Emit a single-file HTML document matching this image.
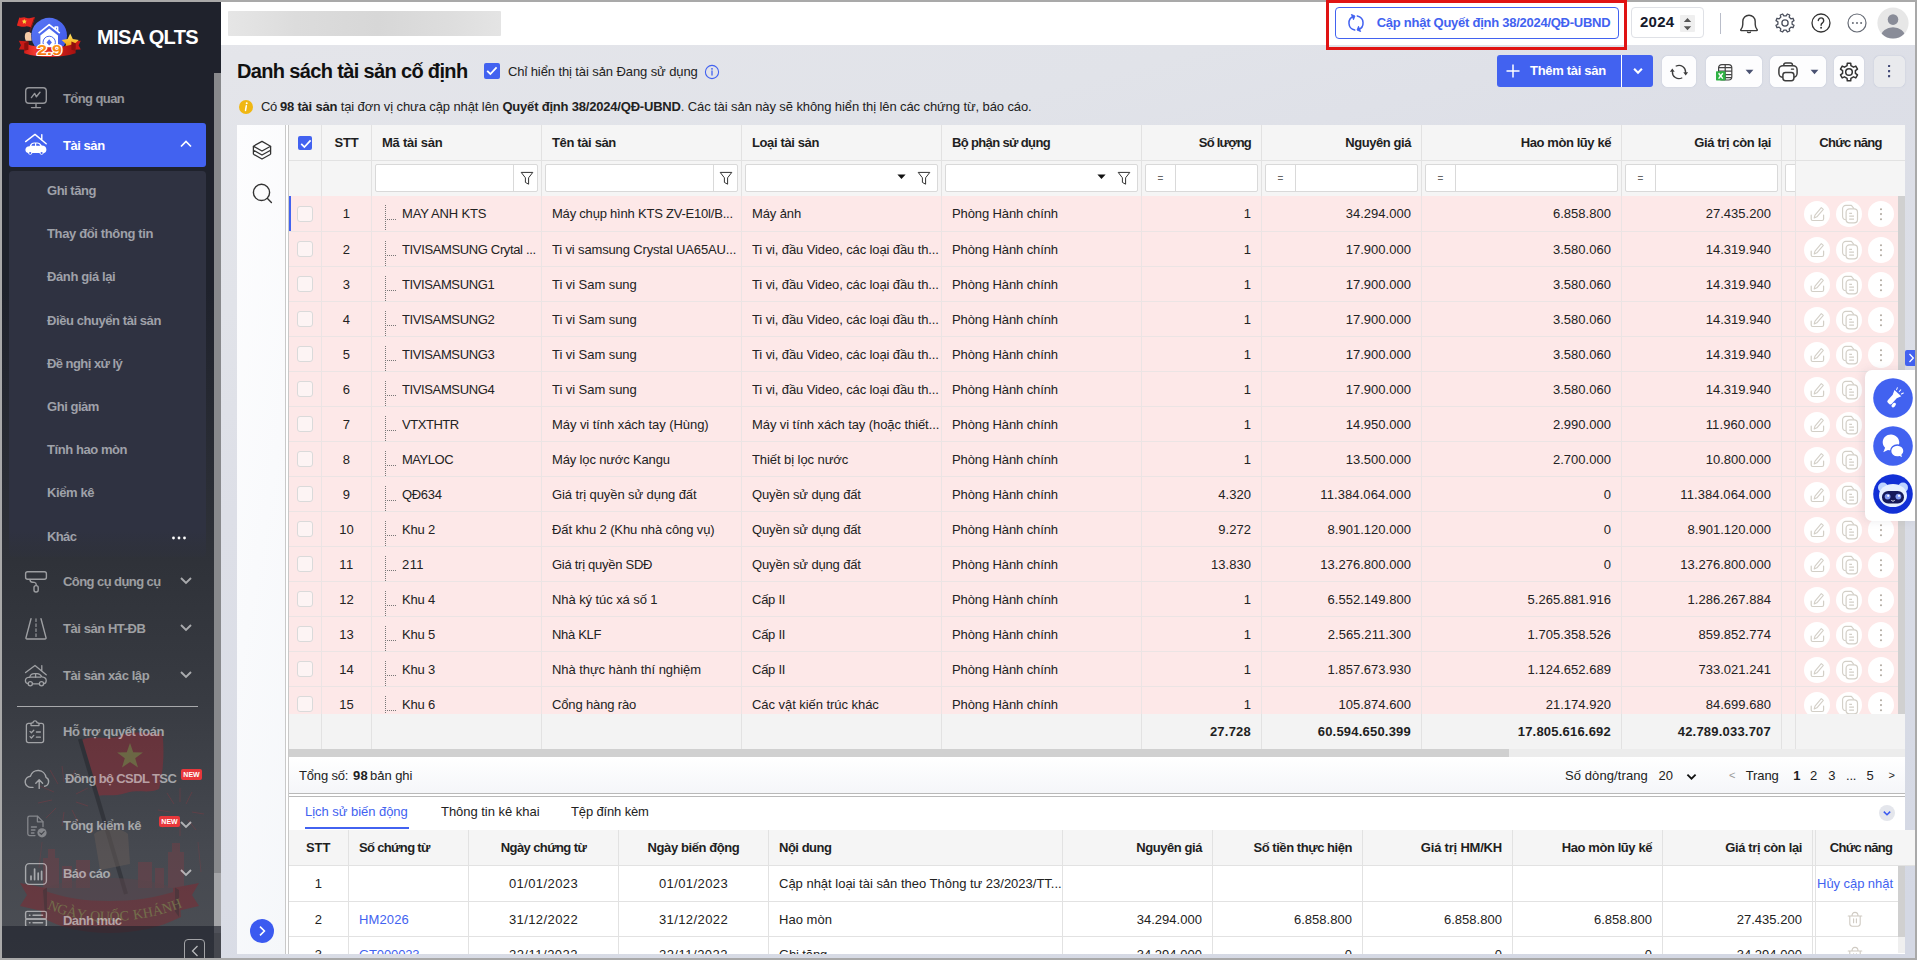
<!DOCTYPE html>
<html lang="vi"><head>
<meta charset="utf-8">
<title>MISA QLTS - Danh sách tài sản cố định</title>
<style>
*{box-sizing:border-box;margin:0;padding:0}
html,body{width:1917px;height:960px;overflow:hidden;background:#a9a9a9;font-family:"Liberation Sans",sans-serif;font-size:13px;color:#1f1f1f}
#app{position:absolute;left:2px;top:2px;width:1913px;height:956px;overflow:hidden;background:linear-gradient(165deg,#e6e7ec 0%,#e4e5ea 8%,#e1e3e9 25%,#dddfe7 39%,#dadde6 65%,#d4d8e4 96%)}
.f{white-space:nowrap;display:inline-block}
b,.b{font-weight:bold}
/* ---------- sidebar ---------- */
#side{position:absolute;left:0;top:0;width:219px;height:956px;background:linear-gradient(180deg,#1f222c 0%,#1f222c 30%,#2f3239 58.600%,#383b42 73%,#464950 89%,#4b4e54 100%);overflow:hidden}
#side .logo-t{position:absolute;left:95px;top:23px;font-size:20px;line-height:24px;font-weight:bold;color:#fff}
.mi{position:absolute;left:7px;width:197px;height:44px;color:rgba(255,255,255,.53);font-weight:bold;font-size:13px}
.mi .tx{position:absolute;left:54px;top:0;line-height:44px}
.mi svg.ic{position:absolute;left:14px;top:9px;opacity:.52}
.mi.act svg.ic{opacity:1}
.mi svg.ch{position:absolute;left:170px;top:16px;opacity:.58}
.mi.act svg.ch{opacity:1}
.mi.act{background:#4262f0;border-radius:3px;color:#fff}
.mi.act .tx{top:1px}
#sub{position:absolute;left:7px;top:169px;width:197px;height:386px;background:linear-gradient(180deg,#2f3241 0%,#2f3241 93%,rgba(47,50,65,.2) 100%);border-radius:4px}
#sub div{position:absolute;left:38px;color:#9fa1a9;font-weight:bold;font-size:13px;line-height:20px}
.new{position:absolute;background:#e8373b;color:#fff;font-size:7px;font-weight:bold;border-radius:2px;height:11px;line-height:11.500px;width:21px;text-align:center}
#mwrap{position:absolute;left:0;top:0;width:212px;height:924px;overflow:hidden}
#sdiv{position:absolute;left:15px;top:704px;width:181px;height:1px;background:#a8a9ac}
#sfoot{position:absolute;left:0;top:924px;width:219px;height:32px;background:rgba(31,34,44,.64);z-index:4}
#sfoot i{position:absolute;left:182px;top:13px;width:21px;height:24px;border:1px solid #a2a3a6;border-radius:4px}
#sscroll{position:absolute;left:212px;top:71px;width:7px;height:885px;background:#88898c}
#sscroll i{position:absolute;left:0;top:800px;width:7px;height:60px;background:#a4a5a8}
/* ---------- topbar ---------- */
#top{position:absolute;left:219px;top:0;width:1694px;height:43px;background:#fff}
#blur{position:absolute;left:7px;top:9px;width:273px;height:25px;background:linear-gradient(90deg,#e6e6e6,#dcdcdc 25%,#d7d7d7 55%,#dddddd 80%,#e4e4e4);border-radius:1px}
#redbox{position:absolute;left:1326px;top:0;width:301px;height:50px;border:3px solid #e01313;z-index:20}
#btnupd{position:absolute;left:1333px;top:5px;width:284px;height:32px;border:1px solid #4262f0;border-radius:4px;background:#fff;color:#4262f0;font-weight:bold;font-size:13px;z-index:21}
#btnupd .f{position:absolute;left:40.700px;top:0;line-height:30px}
#btnupd svg{position:absolute;left:11px;top:6px}
#year{position:absolute;left:1629px;top:5px;width:73px;height:31px;border:1px solid #dfe1e6;border-radius:4px;background:#fff}
#year .f{position:absolute;left:8px;top:-1px;line-height:30px;font-size:15px;font-weight:bold;color:#161a2c}
#year i{position:absolute;left:48px;top:6.500px;width:15px;height:17.500px;background:#efefef;border-radius:1px}
#year svg{position:absolute;left:51px;top:8.500px}
#tdiv{position:absolute;left:1718px;top:11px;width:1px;height:21px;background:#b9bdc9}
.ti{position:absolute}
/* ---------- heading ---------- */
#h1{position:absolute;left:235px;top:55px;font-size:20px;line-height:28px;font-weight:bold;color:#111}
.cbx{position:absolute;width:14.5px;height:14.5px;border-radius:2px;background:#4262f0}
.cbx svg{position:absolute;left:2px;top:3px}
#chk{position:absolute;left:506px;top:60px;line-height:20px;color:#222}
#note{position:absolute;left:259px;top:95px;line-height:20px;color:#222;white-space:nowrap}
.btn{position:absolute;top:53.500px;height:31px;border-radius:5px;background:#fdfdfe;border:1px solid #fdfdfe;box-shadow:0 0 1.500px #b9c0d4}
.btn svg{position:absolute}
#add{position:absolute;left:1495px;top:53px;width:156px;height:32px;border-radius:3px;background:#4262f0;color:#fff;font-weight:bold}
#add .f{position:absolute;left:33px;top:0;line-height:31px}
#add i{position:absolute;left:124px;top:0;width:1px;height:32px;background:#fff}
#add svg{position:absolute}
/* ---------- grid ---------- */
#lp{position:absolute;left:235px;top:123px;width:48px;height:829px;background:linear-gradient(100deg,#fdfdfe,#f5f7fa)}
#lpl{position:absolute;left:283px;top:123px;width:4px;height:829px;background:#fff;border-left:1px solid #c9c9c9;border-right:1px solid #c9c9c9}
#grid{position:absolute;left:287px;top:123px;width:1616px;height:632px;background:#fff;overflow:hidden}
#ghead{position:absolute;left:0;top:0;width:1616px;height:71px;background:#f5f5f5}
.hc{position:absolute;top:0;height:36px;border-right:1px solid #e2e2e2;border-bottom:1px solid #e2e2e2;font-weight:bold;line-height:35px;color:#1f1f1f;white-space:nowrap;overflow:hidden;padding:0 10px}
.hc.hr{text-align:right}.hc.hm{text-align:center;padding:0}
.fc{position:absolute;top:36px;height:35px;border-right:1px solid #e2e2e2}
.fi{position:absolute;top:3px;height:28px;background:#fff;border:1px solid #d9d9d9;border-radius:2px}
.fi i{position:absolute;top:0;width:1px;height:26px;background:#d9d9d9}
.fi svg{position:absolute}
.fi em{position:absolute;left:0;top:0;width:29px;text-align:center;line-height:28px;font-style:normal;font-size:10px;color:#666}
#rows{position:absolute;left:0;top:71px;width:1616px;height:518px;overflow:hidden}
.row{position:absolute;left:0;width:1616px;height:35px;background:#fde8e8}
.row.sel{height:36px}
.row.sel .c{height:36px;line-height:36px}
.row.sel .cb{top:10px}
.row.sel .ric{top:5px}
.row.sel:before{content:"";position:absolute;left:0;top:0;width:2px;height:35px;background:#4262f0;z-index:3}
.c{position:absolute;top:0;height:35px;border-right:1px solid #ebe4e4;border-bottom:1px solid #ebe4e4;line-height:35px;color:#222;white-space:nowrap;overflow:hidden}
.c.ctr{text-align:center}
.c.rt{text-align:right;padding-right:10px}
.c .t{position:absolute;top:0;overflow:hidden;white-space:nowrap}
.c.fn{border-right:none}
.cb{position:absolute;left:8px;top:9px;width:16px;height:16px;border:1px solid #dadada;border-radius:3px;background:#fdf4f4}
.tree{position:absolute;left:13px;top:9px;width:11px;height:26px;background:repeating-linear-gradient(180deg,#777 0 1px,transparent 1px 2px) 0 0/1px 100% no-repeat}
.tree:after{content:"";position:absolute;left:0;top:14px;width:11px;height:1px;background:repeating-linear-gradient(90deg,#777 0 1px,transparent 1px 2px)}
.ric{position:absolute;top:5px}
#vsb{position:absolute;left:1609px;top:71px;width:7px;height:518px;background:#d0d0d0}
#sum{position:absolute;left:0;top:589px;width:1616px;height:35px;background:#f3f3f3}
#sum div{position:absolute;top:0;height:35px;border-right:1px solid #e2e2e2;line-height:35px;font-weight:bold;text-align:right;padding-right:10px;color:#1f1f1f}
#hsb{position:absolute;left:0;top:624px;width:1616px;height:8px;background:#ececec}
#hsb i{position:absolute;left:0;top:0;width:1220px;height:8px;background:#d0d0d0}
/* ---------- paging ---------- */
#pg{position:absolute;left:287px;top:755px;width:1616px;height:36px;background:linear-gradient(180deg,#fff,#f5f6f9);line-height:37px;color:#222}
#pg .f{position:absolute;top:0}
#pgl{position:absolute;left:287px;top:791px;width:1616px;height:4px;background:#fff;border-top:1px solid #b9b9b9;border-bottom:1px solid #b9b9b9}
/* ---------- bottom ---------- */
#bt{position:absolute;left:287px;top:795px;width:1616px;height:157px;background:#fff;overflow:hidden}
#tabs .f{position:absolute;top:5px;line-height:20px;color:#222}
#tabs .on{color:#4262f0}
#tabs i{position:absolute;left:16px;top:30px;width:104px;height:2px;background:#4262f0}
#bh{position:absolute;left:0;top:33px;width:1616px;height:36px;background:#f5f5f5}
.br{position:absolute;left:0;width:1616px;height:35px;background:#fff}
.br .c{border-color:#e2e2e2;height:35px;line-height:35px}
.br.b1,.br.b1 .c{height:36px;line-height:36px}
a{color:#4262f0;text-decoration:none}
</style>
</head>
<body>
<div id="app">

<!-- ================= SIDEBAR ================= -->
<div id="side">
<svg style="position:absolute;left:0;top:690px;opacity:.33" width="212" height="266" viewBox="0 0 212 266">
<g fill="none" stroke="#c0303a" stroke-width="1" opacity=".7"><path d="M56 92l-8-14M62 90l-2-16M68 92l5-14M52 100l-14-6M50 108l-14 3M54 116l-10 10M62 120l-2 14M70 118l6 12M74 110l12 4M74 102l12-6"></path><path d="M172 112l-7-11M178 110l0-14M184 112l6-12M168 120l-12-2M170 128l-10 8M178 132l0 12M186 128l8 10M190 120l12 2"></path><path d="M40 150l-3 26M196 150l3 30" stroke-width=".7"></path></g>
<path d="M79 48.500c12-7 26 1 40-5s28-1 41.500-2c2 18 1 38-3.500 55.500-10 5-20 0-33 4s-20 1-30 3z" fill="#c01f2a"></path>
<path d="M128 51l3.200 9.200 9.700.2-7.700 5.900 2.800 9.300-8-5.500-8 5.500 2.800-9.300-7.700-5.900 9.700-.2z" fill="#c9b63e"></path>
<path d="M78 47l46 155" stroke="#14151a" stroke-width="4.200"></path>
<path d="M92 142c6-6 26-8 34 0l2 30-30 6z" fill="#a08068" opacity=".55"></path>
<path d="M41 196v-30h5v-9h7v9h4v30zM60 196v-22h10v22zM74 196v-28h14v28zM136 196v-26h14v26zM153 196v-20h9v20zM166 196v-36h4v-9h8v9h4v36z" fill="#8a3a42"></path>
<path d="M44 196c20-8 42-10 62-10s44 2 66 10v20H44z" fill="#7c3a42" opacity=".55"></path>
<path d="M18 191l26 5v24l-26-6 7-11zM197 191l-26 5v24l26-6-7-11z" fill="#a3161f"></path>
<path d="M41 198c20 8 42 11 66 11s48-3 70-11l2 27c-22 11-46 16-72 16s-48-5-68-16z" fill="#9c1a22"></path>
<path d="M41 198l4-2.500v24l-2 5.500zM177 198l-4-2.500v24l4 5.500z" fill="#5e0c12"></path>
<path id="rib" d="M44 216c20 9 41 13 63 13s50-4 76-15" fill="none"></path>
<text font-family="Liberation Serif, serif" font-size="14" fill="#c9b63e" word-spacing="1"><textPath href="#rib" startOffset="1">NGÀY QUỐC KHÁNH</textPath></text>
</svg>
<svg style="position:absolute;left:14px;top:14px" width="72" height="46" viewBox="0 0 72 46">
<defs><linearGradient id="lg1" x1="0" y1="0" x2="1" y2="1"><stop offset="0" stop-color="#5a78f6"></stop><stop offset="1" stop-color="#3d55e6"></stop></linearGradient>
<linearGradient id="lg2" x1="0" y1="0" x2="0" y2="1"><stop offset="0" stop-color="#ffe566"></stop><stop offset=".55" stop-color="#f8b523"></stop><stop offset="1" stop-color="#e88a10"></stop></linearGradient>
<linearGradient id="lg3" x1="0" y1="0" x2="1" y2="0"><stop offset="0" stop-color="#d21e1a"></stop><stop offset=".2" stop-color="#f0392f"></stop><stop offset=".6" stop-color="#d8201b"></stop><stop offset="1" stop-color="#a51210"></stop></linearGradient>
<linearGradient id="lg4" x1="0" y1="0" x2="0" y2="1"><stop offset="0" stop-color="#ffa51a"></stop><stop offset="1" stop-color="#f46c0a"></stop></linearGradient></defs>
<path d="M3.300 1.600c2.200.8 3.600-.6 5.600-.2s3.400 1.200 5.400.6 3-.8 4.600-.8l-3.400 10.600c-1.800-.6-3.400-1.800-5.600-1.400s-3.600.6-5.400.2-2.800-.4-3.600-1z" fill="#e5261f"></path><path d="M8.300 3.100l.8 1.500 1.700.2-1.200 1.200.3 1.700-1.600-.8-1.500.8.300-1.700-1.300-1.200 1.700-.2z" fill="#f9d640"></path>
<path d="M18.300 2.200l-4.800 13.800" stroke="#7a1512" stroke-width=".9"></path>
<path d="M9.600 17c1.600-1.400 4.200-1.400 5.400.2l.6 7.600H9.800c-1.200-2.400-1.400-5.800-.2-7.800z" fill="#f6cba6"></path>
<circle cx="33.200" cy="19.600" r="17.800" fill="url(#lg1)"></circle>
<path d="M22.600 17.200l10.600-8.600 10.600 8.600M41.600 15v-4h-2.400v2" fill="none" stroke="#fff" stroke-width="1.600" stroke-linejoin="round"></path>
<path d="M24.400 19.600l8.800-7.200 8.800 7.200v12H24.400z" fill="#fff"></path>
<circle cx="33.200" cy="26.400" r="6.200" fill="#fff" stroke="#4a66ee" stroke-width="1"></circle><path d="M33.200 23.200l2.700 3.200-2.700 3.200-2.700-3.200z" fill="#4a66ee"></path>
<path d="M2.800 24.800l9.600.6v8.400l-9.600-.4 2.200-4.200zM64.800 24.800l-9.400.6v8.400l9.400-.4-2.200-4.200z" fill="#c81a16"></path>
<path d="M54.200 17.600l2.600 5.500 6 .8-4.400 4.200 1.100 6-5.300-2.900-5.300 2.900 1.100-6-4.400-4.200 6-.8z" fill="url(#lg2)"></path>
<path d="M8.200 27.200c8 3 16.600 4 25.600 4s17.800-1 25.800-4v10c-8 2.600-16.800 3.800-25.800 3.800S16.200 39.800 8.200 37.200z" fill="url(#lg3)"></path>
<path d="M8.200 27.200l4.200-1.800v8.400l-4.200 1zM59.600 27.200l-4.200-1.800v8.400l4.200 1z" fill="#8e0f0d"></path>
<text x="33.600" y="38.800" text-anchor="middle" font-family="Liberation Sans, sans-serif" font-weight="bold" font-size="15.500" fill="url(#lg4)" stroke="#fff" stroke-width="2.200" paint-order="stroke" stroke-linejoin="round" textLength="25" lengthAdjust="spacingAndGlyphs">2.9</text>
</svg>
  <div class="logo-t f" style="letter-spacing: -0.63px;">MISA QLTS</div>
<div id="mwrap">
<div class="mi" style="top:74.5px"><svg class="ic" style="margin-top:-1.500px" width="26" height="26" viewBox="0 0 26 26" fill="none" stroke="#fff" stroke-width="1.4" stroke-linecap="round" stroke-linejoin="round"><rect x="2.7" y="3.7" width="20.6" height="15.6" rx="3.2"></rect><path d="M13 19.5v4M8.5 23.6h9M8.4 13.6l3.2-4.2 1.8 3.4 3.6-4.6"></path></svg><span class="tx f" style="left: 54px; letter-spacing: -0.59px;">Tổng quan</span></div>
<div class="mi act" style="top:121px"><svg class="ic" width="26" height="26" viewBox="0 0 26 26"><path d="M2.6 9.6L12 2.4l11.2 9.4M18.8 2.6v5.6" fill="none" stroke="#fff" stroke-width="1.4" stroke-linecap="round" stroke-linejoin="round"></path><path d="M6.6 14.2c.6-2.4 2.2-3.8 4.8-3.8h2.8c2 0 3.4 1 4.6 3.2 2.6.2 4.6 1.4 4.6 3.8 0 2-1 3.4-2.6 3.6a2.3 2.3 0 0 1-4.4 0H9.4a2.3 2.3 0 0 1-4.4 0c-1.600-.2-2.600-1.400-2.600-3.200 0-2 1.600-3.400 4.200-3.600z" fill="#fff"></path><path d="M8.4 13.8c.4-1.400 1.400-2.200 2.800-2.200h.8v2.200zM13.200 11.600h1.200c1.200 0 2.200.8 2.800 2.200h-4z" fill="#4262f0"></path><circle cx="7.2" cy="21" r="1.100" fill="#4262f0"></circle><circle cx="18.600" cy="21" r="1.100" fill="#4262f0"></circle></svg><span class="tx f" style="left: 54px; letter-spacing: -0.45px;">Tài sản</span><svg class="ch" width="14" height="10" viewBox="0 0 14 10"><path d="M2 7.500l5-5 5 5" fill="none" stroke="#fff" stroke-width="1.700"></path></svg></div>
<div id="sub"><div class="f" style="top: 10px; letter-spacing: -0.48px;">Ghi tăng</div><div class="f" style="top: 53px; letter-spacing: -0.36px;">Thay đổi thông tin</div><div class="f" style="top: 96px; letter-spacing: -0.39px;">Đánh giá lại</div><div class="f" style="top: 140px; letter-spacing: -0.43px;">Điều chuyển tài sản</div><div class="f" style="top: 183px; letter-spacing: -0.55px;">Đề nghị xử lý</div><div class="f" style="top: 226px; letter-spacing: -0.46px;">Ghi giảm</div><div class="f" style="top: 269px; letter-spacing: -0.43px;">Tính hao mòn</div><div class="f" style="top: 312px; letter-spacing: -0.4px;">Kiểm kê</div><div class="f" style="top: 356px; letter-spacing: -0.63px;">Khác</div><svg style="position:absolute;left:162px;top:364px" width="16" height="6" viewBox="0 0 16 6"><circle cx="2.500" cy="3" r="1.400" fill="#fff"></circle><circle cx="8" cy="3" r="1.400" fill="#fff"></circle><circle cx="13.500" cy="3" r="1.400" fill="#fff"></circle></svg></div>
<div class="mi" style="top:557.5px"><svg class="ic" width="26" height="26" viewBox="0 0 26 26" fill="none" stroke="#fff" stroke-width="1.4" stroke-linecap="round" stroke-linejoin="round"><rect x="2.6" y="2.8" width="20.8" height="7.4" rx="2"></rect><path d="M7 10.400c0 2 1 2.600 2.600 2.800l1.800.2c1.200.2 1.800.8 1.800 2.200v1"></path><rect x="11" y="16.600" width="4.200" height="6.400" rx="2"></rect></svg><span class="tx f" style="left: 54px; letter-spacing: -0.57px;">Công cụ dụng cụ</span><svg class="ch" width="14" height="10" viewBox="0 0 14 10"><path d="M2 2l5 5 5-5" fill="none" stroke="#fff" stroke-width="1.900"></path></svg></div>
<div class="mi" style="top:604.5px"><svg class="ic" width="26" height="26" viewBox="0 0 26 26" fill="none" stroke="#fff" stroke-width="1.4" stroke-linecap="round" stroke-linejoin="round"><path d="M8 2.800L3 21.600c-.2.800.2 1.400 1 1.400h18c.8 0 1.200-.6 1-1.400L18 2.800"></path><path d="M13 2.800v18" stroke-dasharray="2.600 2.400" stroke-width="1.100"></path></svg><span class="tx f" style="left: 54px; letter-spacing: -0.44px;">Tài sản HT-ĐB</span><svg class="ch" width="14" height="10" viewBox="0 0 14 10"><path d="M2 2l5 5 5-5" fill="none" stroke="#fff" stroke-width="1.900"></path></svg></div>
<div class="mi" style="top:651.5px"><svg class="ic" width="26" height="26" viewBox="0 0 26 26" fill="none" stroke="#fff" stroke-width="1.300" stroke-linecap="round" stroke-linejoin="round"><path d="M2.600 9.600L12 2.400l11.200 9.400M18.800 2.600v5.600"></path><path d="M6.600 14.400c.6-2.400 2.200-3.800 4.800-3.800h2.800c2 0 3.400 1 4.600 3.200 2.600.2 4.400 1.400 4.400 3.600 0 1.800-.8 3-2.200 3.200M16 20.800H9.800M4.800 20.600c-1.400-.2-2.400-1.400-2.400-3 0-2 1.600-3.200 4.200-3.400h11"></path><circle cx="7.300" cy="20.800" r="2.100"></circle><circle cx="18.500" cy="20.800" r="2.100"></circle><path d="M12.600 10.800v3.400"></path></svg><span class="tx f" style="left: 54px; letter-spacing: -0.42px;">Tài sản xác lập</span><svg class="ch" width="14" height="10" viewBox="0 0 14 10"><path d="M2 2l5 5 5-5" fill="none" stroke="#fff" stroke-width="1.900"></path></svg></div>
<div class="mi" style="top:708px"><svg class="ic" style="margin-left:-1px" width="26" height="26" viewBox="0 0 26 26" fill="none" stroke="#fff" stroke-width="1.300" stroke-linecap="round" stroke-linejoin="round"><path d="M9 4.400H6.400a2 2 0 0 0-2 2v15.200a2 2 0 0 0 2 2h13.200a2 2 0 0 0 2-2V6.400a2 2 0 0 0-2-2H17"></path><path d="M9 6.600V4.800c0-.6.400-1 1-1h1a2 2 0 0 1 4 0h1c.6 0 1 .4 1 1v1.800z"></path><path d="M8 12.400l1.400 1.400 2.400-2.600M8 17.600l1.400 1.400 2.400-2.600M14.400 13h4M14.400 18.200h4"></path></svg><span class="tx f" style="left: 54px; letter-spacing: -0.46px;">Hỗ trợ quyết toán</span></div>
<div class="mi" style="top:754.5px"><svg class="ic" width="28" height="26" viewBox="0 0 28 26" fill="none" stroke="#fff" stroke-width="1.400" stroke-linecap="round" stroke-linejoin="round"><path d="M10 21.400H8.200A5.600 5.600 0 0 1 7.400 10.200 8 8 0 0 1 23 11.400c1.800.8 2.800 2.600 2.600 4.600-.2 2.200-1.800 3.800-4 4.200"></path><path d="M16.200 22.400v-8.200M12.800 17.200l3.400-3.400 3.400 3.400"></path></svg><span class="tx f" style="left: 56px; letter-spacing: -0.62px;">Đồng bộ CSDL TSC</span></div>
<div class="mi" style="top:801.5px"><svg class="ic" width="26" height="26" viewBox="0 0 26 26" fill="none" stroke="#c2c3c6" stroke-width="1.300" stroke-linecap="round" stroke-linejoin="round"><path d="M12 22.600H6.600a1.800 1.800 0 0 1-1.800-1.800V5a1.800 1.800 0 0 1 1.800-1.800h8l5.400 5.400v5"></path><path d="M14.400 3.400v5.400h5.400M8.400 14h5M8.400 17h3.600M8.400 20h2.600"></path><circle cx="19" cy="19.800" r="4.600" fill="#c2c3c6" stroke="none"></circle><path d="M16.800 19.800l1.600 1.600 2.800-3" stroke="#45484e" stroke-width="1.200"></path></svg><span class="tx f" style="left: 54px; letter-spacing: -0.42px;">Tổng kiểm kê</span><svg class="ch" width="14" height="10" viewBox="0 0 14 10"><path d="M2 2l5 5 5-5" fill="none" stroke="#fff" stroke-width="1.900"></path></svg></div>
<div class="mi" style="top:849.5px"><svg class="ic" width="26" height="26" viewBox="0 0 26 26" fill="none" stroke="#fff" stroke-width="1.400" stroke-linecap="round" stroke-linejoin="round"><rect x="2.600" y="2.600" width="20.800" height="20.800" rx="3.600"></rect><path d="M8 18.600v-3.400M11.600 18.600V8M15.200 18.600v-6.400M18.600 18.600v-8.200" stroke-width="1.700"></path></svg><span class="tx f" style="left: 54px; letter-spacing: -0.53px;">Báo cáo</span><svg class="ch" width="14" height="10" viewBox="0 0 14 10"><path d="M2 2l5 5 5-5" fill="none" stroke="#fff" stroke-width="1.900"></path></svg></div>
<div class="mi" style="top:896.5px"><svg class="ic" width="26" height="26" viewBox="0 0 26 26" fill="none" stroke="#fff" stroke-width="1.400" stroke-linecap="round" stroke-linejoin="round"><rect x="2.600" y="3.400" width="20.800" height="7.600" rx="1.600"></rect><rect x="2.600" y="11" width="20.800" height="7.600" rx="1.600"></rect><path d="M2.600 18.600v4.600M23.400 18.600v4.600M6.400 7.200h.6M10 7.200h9.600M6.400 14.800h.6M10 14.800h9.600"></path></svg><span class="tx f" style="left: 54px; letter-spacing: -0.54px;">Danh mục</span></div>
<div class="new" style="left:179px;top:767px">NEW</div>
<div class="new" style="left:157px;top:814px">NEW</div>
  <div id="sdiv"></div>
</div>
  <div id="sscroll"><i></i></div>

  <div id="sfoot"><i></i><svg style="position:absolute;left:187px;top:17px" width="12" height="16" viewBox="0 0 12 16"><path d="M8.5 3L3.5 8l5 5" fill="none" stroke="#b8b9bc" stroke-width="1.3"></path></svg></div>
</div>

<!-- ================= TOPBAR ================= -->
<div id="top">
  <div id="blur"></div>
</div>
<div id="btnupd"><svg width="18" height="18" viewBox="0 0 18 18"><g fill="none" stroke="#4262f0" stroke-width="1.500" stroke-linecap="round"><path d="M7.700 16A7.100 7.100 0 0 1 6.800 2.300"></path><path d="M10.300 2A7.100 7.100 0 0 1 11.200 15.700"></path></g><path d="M4.300.3l3.700 1.700-1.500 3.800zM13.700 17.700l-3.700-1.700 1.500-3.800z" fill="#4262f0" stroke="#4262f0" stroke-width=".8" stroke-linejoin="round"></path></svg><span class="f" style="letter-spacing: -0.26px;">Cập nhật Quyết định 38/2024/QĐ-UBND</span></div>
<div id="year"><i></i><svg width="9" height="14" viewBox="0 0 9 14"><path d="M.8 5l3.700-4 3.700 4zM.8 9.200l3.700 4 3.700-4z" fill="#555"></path></svg><span class="f" style="letter-spacing: 0.27px;">2024</span></div>
<div id="tdiv"></div>
<svg class="ti" style="left:1736px;top:9px" width="22" height="24" viewBox="0 0 22 24"><path d="M3.200 19.600h15.600c.5 0 .7-.5.400-.9-1.400-1.600-2-3-2-5.500v-2.800a6.200 6.200 0 0 0-12.400 0v2.800c0 2.500-.6 3.900-2 5.500-.3.400-.1.900.4.900z" fill="none" stroke="#3a3a3a" stroke-width="1.400" stroke-linejoin="round"></path><path d="M9.400 20.400a1.600 1.300 0 0 0 3.200 0" fill="none" stroke="#3a3a3a" stroke-width="1.300"></path></svg>
<svg class="ti" style="left:1771.900px;top:10px" width="22" height="22" viewBox="0 0 22 22"><g fill="none" stroke="#4a4f5c" stroke-width="1.300" stroke-linejoin="round"><path d="M12.19 3.90L13.33 2.00L15.72 2.99L15.18 5.14L16.86 6.82L19.01 6.28L20.00 8.67L18.10 9.81L18.10 12.19L20.00 13.33L19.01 15.72L16.86 15.18L15.18 16.86L15.72 19.01L13.33 20.00L12.19 18.10L9.81 18.10L8.67 20.00L6.28 19.01L6.82 16.86L5.14 15.18L2.99 15.72L2.00 13.33L3.90 12.19L3.90 9.81L2.00 8.67L2.99 6.28L5.14 6.82L6.82 5.14L6.28 2.99L8.67 2.00L9.81 3.90z"></path><circle cx="11" cy="11" r="3.100"></circle></g></svg>
<svg class="ti" style="left:1808px;top:10px" width="22" height="22" viewBox="0 0 22 22"><circle cx="11" cy="11" r="9" fill="none" stroke="#333" stroke-width="1.300"></circle><path d="M8.300 8.600a2.700 2.700 0 1 1 4.300 2.200c-.9.700-1.500 1.100-1.500 2.400" fill="none" stroke="#333" stroke-width="1.400" stroke-linecap="round"></path><circle cx="11.100" cy="15.700" r=".95" fill="#333"></circle></svg>
<svg class="ti" style="left:1844px;top:10px" width="22" height="22" viewBox="0 0 22 22"><circle cx="11" cy="11" r="9" fill="none" stroke="#666b75" stroke-width="1.200"></circle><circle cx="6.900" cy="11" r="1" fill="#666b75"></circle><circle cx="11" cy="11" r="1" fill="#666b75"></circle><circle cx="15.100" cy="11" r="1" fill="#666b75"></circle></svg>
<svg class="ti" style="left:1875px;top:5px" width="32" height="32" viewBox="0 0 32 32"><defs><clipPath id="av"><circle cx="16" cy="16" r="15.600"></circle></clipPath></defs><circle cx="16" cy="16" r="15.600" fill="#e7e7e7"></circle><g clip-path="url(#av)" fill="#898c98"><circle cx="16" cy="12.600" r="5.300"></circle><ellipse cx="16" cy="29.500" rx="12" ry="9.300"></ellipse></g></svg>

<!-- ================= HEADING ================= -->
<div id="h1" class="f" style="letter-spacing: -0.65px;">Danh sách tài sản cố định</div>
<div class="cbx" style="left:481.600px;top:60.700px;width:16.300px;height:16.300px"><svg style="left:2.300px;top:3.400px" width="12" height="10" viewBox="0 0 12 10"><path d="M1.2 4.8l3.2 3.2L10.6 1.4" fill="none" stroke="#fff" stroke-width="1.8"></path></svg></div>
<div id="chk" class="f" style="letter-spacing: -0.1px;">Chỉ hiển thị tài sản Đang sử dụng</div>
<svg style="position:absolute;left:702px;top:62px" width="16" height="16" viewBox="0 0 16 16"><circle cx="8" cy="8" r="6.6" fill="none" stroke="#4262f0" stroke-width="1.1"></circle><path d="M8 7v4" stroke="#4262f0" stroke-width="1.3" stroke-linecap="round"></path><circle cx="8" cy="4.8" r=".9" fill="#4262f0"></circle></svg>
<svg style="position:absolute;left:236px;top:97px" width="16" height="16" viewBox="0 0 16 16"><circle cx="8" cy="8" r="7" fill="#f0b712"></circle><path d="M8.3 6.8l-.8 4.6" stroke="#fff" stroke-width="1.5" stroke-linecap="round"></path><circle cx="8.7" cy="4.3" r="1" fill="#fff"></circle></svg>
<div id="note"><span class="f" style="letter-spacing: -0.38px;">Có&nbsp;</span><b class="f" style="letter-spacing: -0.22px;">98 tài sản</b><span class="f" style="letter-spacing: -0.1px;">&nbsp;tại đơn vị chưa cập nhật lên&nbsp;</span><b class="f" style="letter-spacing: -0.2px;">Quyết định 38/2024/QĐ-UBND</b><span class="f" style="letter-spacing: -0.1px;">. Các tài sản này sẽ không hiển thị lên các chứng từ, báo cáo.</span></div>
<div id="add"><svg style="left:8px;top:8px" width="16" height="16" viewBox="0 0 16 16"><path d="M8 1.500v13M1.500 8h13" stroke="#fff" stroke-width="1.500"></path></svg><span class="f" style="letter-spacing: -0.3px;">Thêm tài sản</span><i></i><svg style="left:135.700px;top:11.500px" width="10" height="8" viewBox="0 0 10 8"><path d="M1.100 1.800L5 5.700l3.900-3.900" fill="none" stroke="#fff" stroke-width="2.100"></path></svg></div>
<div class="btn" style="left:1660px;width:34px"><svg style="left:5.850px;top:5.300px" width="20" height="20" viewBox="0 0 20 20"><g fill="none" stroke="#3c3c3c" stroke-width="1.300" stroke-linecap="round"><path d="M7.200 4A6.600 6.600 0 0 1 16.600 10.300"></path><path d="M12.800 16A6.600 6.600 0 0 1 3.400 9.700"></path></g><path d="M14.300 10.200h4.800l-2.400 3.200zM.9 9.800h4.800L3.300 6.600z" fill="#3c3c3c"></path></svg></div>
<div class="btn" style="left:1704px;width:56px"><svg style="left:9px;top:6px" width="20" height="20" viewBox="0 0 20 20"><g fill="none" stroke="#444" stroke-width="1.200"><rect x="2.600" y="1.600" width="13.200" height="15.400" rx="3.200"></rect><path d="M2.600 4.600h13.200M2.600 8.100h13.200M2.600 11.700h13.200M2.600 14.600h13.200M9.200 1.600v15.400"></path></g><rect x="0" y="8.300" width="9.500" height="9.100" rx=".6" fill="#2fb344"></rect><path d="M2.600 10.200l4.200 5.400M6.800 10.200l-4.200 5.400" stroke="#fff" stroke-width="1.400"></path></svg><svg style="left:38.400px;top:12.600px" width="9" height="6" viewBox="0 0 9 6"><path d="M.6.800h7.800L4.500 5.200z" fill="#4a5272"></path></svg></div>
<div class="btn" style="left:1768px;width:56px"><svg style="left:6.200px;top:5.500px" width="22" height="22" viewBox="0 0 22 22" fill="none" stroke="#3c3c3c" stroke-width="1.500" stroke-linejoin="round"><path d="M6.800 3.600V2.800c0-1 .9-1.800 2-1.800h4.600c1.100 0 2 .8 2 1.800v.8"></path><rect x="1.900" y="3.700" width="18.200" height="11.600" rx="4"></rect><rect x="5.900" y="10.400" width="11" height="8.300" rx="2.600" fill="#fdfdfe"></rect><path d="M14.400 7.200h2.200" stroke-linecap="round" stroke-width="1.200"></path></svg><svg style="left:38.500px;top:12.600px" width="9" height="6" viewBox="0 0 9 6"><path d="M.6.800h7.800L4.500 5.200z" fill="#4a5272"></path></svg></div>
<div class="btn" style="left:1832px;width:30px"><svg style="left:2.900px;top:4.300px" width="22" height="22" viewBox="0 0 22 22"><g fill="none" stroke="#333" stroke-width="1.500" stroke-linejoin="round"><path d="M9.07 4.69L9.28 2.17L12.72 2.17L12.93 4.69L15.50 6.17L17.79 5.10L19.51 8.07L17.43 9.52L17.43 12.48L19.51 13.93L17.79 16.90L15.50 15.83L12.93 17.31L12.72 19.83L9.28 19.83L9.07 17.31L6.50 15.83L4.21 16.90L2.49 13.93L4.57 12.48L4.57 9.52L2.49 8.07L4.21 5.10L6.50 6.17z"></path><circle cx="11" cy="11" r="3.300"></circle></g></svg></div>
<div class="btn" style="left:1871.500px;width:31px;background:#e9eaed;border-color:#e9eaed"><svg style="left:11.500px;top:4.500px" width="6" height="20" viewBox="0 0 6 20"><rect x="2" y="4" width="2.100" height="2.100" rx=".5" fill="#3f4775"></rect><rect x="2" y="9.100" width="2.100" height="2.100" rx=".5" fill="#3f4775"></rect><rect x="2" y="14.100" width="2.100" height="2.100" rx=".5" fill="#3f4775"></rect></svg></div>

<!-- ================= GRID ================= -->
<div id="lp"></div><div id="lpl"></div>
<svg style="position:absolute;left:249px;top:136.500px" width="22" height="24" viewBox="0 0 22 24" fill="none" stroke="#333" stroke-width="1.300" stroke-linejoin="round"><path d="M11 2.400l8.600 4.800L11 12 2.400 7.200z"></path><path d="M2.400 11.200L11 16l8.600-4.800M2.400 15.200L11 20l8.600-4.800M2.400 7.200v8M19.600 7.200v8"></path></svg>
<svg style="position:absolute;left:249px;top:180px" width="24" height="24" viewBox="0 0 24 24" fill="none" stroke="#333" stroke-width="1.400" stroke-linecap="round"><circle cx="10.500" cy="10.400" r="8.100"></circle><path d="M16.500 16.500l3.900 3.900"></path></svg>
<svg style="position:absolute;left:248px;top:917px" width="24" height="24" viewBox="0 0 24 24"><circle cx="12" cy="12" r="12" fill="#3b5af0"></circle><path d="M10 7.600l4.400 4.400-4.400 4.400" fill="none" stroke="#fff" stroke-width="1.600"></path></svg>
<div id="grid">
  <div id="ghead">
<div class="hc hm" style="left:0;width:33px"><div class="cbx" style="left:8.700px;top:10.700px"><svg width="12" height="10" viewBox="0 0 12 10"><path d="M1.200 4.800l3.200 3.200L10.600 1.400" fill="none" stroke="#fff" stroke-width="1.700"></path></svg></div></div>
<div class="hc hm" style="left:33px;width:50px"><span class="f" style="letter-spacing: -0.11px;">STT</span></div>
<div class="hc " style="left:83px;width:170px"><span class="f" style="letter-spacing: -0.23px;">Mã tài sản</span></div>
<div class="hc " style="left:253px;width:200px"><span class="f" style="letter-spacing: -0.36px;">Tên tài sản</span></div>
<div class="hc " style="left:453px;width:200px"><span class="f" style="letter-spacing: -0.38px;">Loại tài sản</span></div>
<div class="hc " style="left:653px;width:200px"><span class="f" style="letter-spacing: -0.64px;">Bộ phận sử dụng</span></div>
<div class="hc hr" style="left:853px;width:120px"><span class="f" style="letter-spacing: -0.78px;">Số lượng</span></div>
<div class="hc hr" style="left:973px;width:160px"><span class="f" style="letter-spacing: -0.44px;">Nguyên giá</span></div>
<div class="hc hr" style="left:1133px;width:200px"><span class="f" style="letter-spacing: -0.42px;">Hao mòn lũy kế</span></div>
<div class="hc hr" style="left:1333px;width:160px"><span class="f" style="letter-spacing: -0.37px;">Giá trị còn lại</span></div>
<div class="hc" style="left:1493px;width:14px;padding:0"></div>
<div class="hc hm" style="left:1507px;width:109px;border-right:none"><span class="f" style="letter-spacing: -0.67px;">Chức năng</span></div>
<div class="fc" style="left:0;width:33px"></div><div class="fc" style="left:33px;width:50px"></div>
<div class="fc" style="left:83px;width:170px"><div class="fi" style="left:3px;width:163px"><i style="left:137px"></i><svg style="left:144px;top:6px" width="14" height="15" viewBox="0 0 14 15"><path d="M1.200 1.400h11.600L8.600 6.800v6.400l-3.200-1.800V6.800z" fill="none" stroke="#333" stroke-width="1" stroke-linejoin="round"></path></svg></div></div>
<div class="fc" style="left:253px;width:200px"><div class="fi" style="left:3px;width:193px"><i style="left:167px"></i><svg style="left:173px;top:6px" width="14" height="15" viewBox="0 0 14 15"><path d="M1.200 1.400h11.600L8.600 6.800v6.400l-3.200-1.800V6.800z" fill="none" stroke="#333" stroke-width="1" stroke-linejoin="round"></path></svg></div></div>
<div class="fc" style="left:453px;width:200px"><div class="fi" style="left:3px;width:193px"><svg style="left:151px;top:8.500px" width="9" height="6" viewBox="0 0 9 6"><path d="M.4.600h8.200L4.500 5z" fill="#111"></path></svg><svg style="left:171px;top:6px" width="14" height="15" viewBox="0 0 14 15"><path d="M1.200 1.400h11.600L8.600 6.800v6.400l-3.200-1.800V6.800z" fill="none" stroke="#333" stroke-width="1" stroke-linejoin="round"></path></svg></div></div>
<div class="fc" style="left:653px;width:200px"><div class="fi" style="left:3px;width:193px"><svg style="left:151px;top:8.500px" width="9" height="6" viewBox="0 0 9 6"><path d="M.4.600h8.200L4.500 5z" fill="#111"></path></svg><svg style="left:171px;top:6px" width="14" height="15" viewBox="0 0 14 15"><path d="M1.200 1.400h11.600L8.600 6.800v6.400l-3.200-1.800V6.800z" fill="none" stroke="#333" stroke-width="1" stroke-linejoin="round"></path></svg></div></div>
<div class="fc" style="left:853px;width:120px"><div class="fi" style="left:3px;width:113px"><i style="left:29px"></i><em>=</em></div></div>
<div class="fc" style="left:973px;width:160px"><div class="fi" style="left:3px;width:153px"><i style="left:29px"></i><em>=</em></div></div>
<div class="fc" style="left:1133px;width:200px"><div class="fi" style="left:3px;width:193px"><i style="left:29px"></i><em>=</em></div></div>
<div class="fc" style="left:1333px;width:160px"><div class="fi" style="left:3px;width:153px"><i style="left:29px"></i><em>=</em></div></div>
<div class="fc" style="left:1493px;width:14px;overflow:hidden"><div class="fi" style="left:3px;width:40px"></div></div>
<div class="fc" style="left:1507px;width:109px;border-right:none;background:#f5f5f5"></div>
  </div>
  <div id="rows">
<div class="row sel" style="top:0px"><div class="c" style="left:0;width:33px"><span class="cb"></span></div><div class="c ctr" style="left:33px;width:50px"><span class="f" style="letter-spacing: 0.08px;">1</span></div><div class="c" style="left:83px;width:170px"><span class="tree"></span><span class="t" style="left:30px;width:139px"><span class="f" style="letter-spacing: -0.19px;">MAY ANH KTS</span></span></div><div class="c" style="left:253px;width:200px"><span class="t" style="left:10px;width:189px"><span class="f" style="letter-spacing: -0.21px;">Máy chụp hình KTS ZV-E10l/B...</span></span></div><div class="c" style="left:453px;width:200px"><span class="t" style="left:10px;width:189px"><span class="f" style="letter-spacing: -0.11px;">Máy ảnh</span></span></div><div class="c" style="left:653px;width:200px"><span class="t" style="left:10px;width:189px"><span class="f" style="letter-spacing: -0.11px;">Phòng Hành chính</span></span></div><div class="c rt" style="left:853px;width:120px"><span class="f" style="letter-spacing: 0.08px;">1</span></div><div class="c rt" style="left:973px;width:160px"><span class="f" style="letter-spacing: 0.02px;">34.294.000</span></div><div class="c rt" style="left:1133px;width:200px"><span class="f" style="letter-spacing: 0.02px;">6.858.800</span></div><div class="c rt" style="left:1333px;width:160px"><span class="f" style="letter-spacing: 0.02px;">27.435.200</span></div><div class="c" style="left:1493px;width:14px"></div><div class="c fn" style="left:1507px;width:109px"></div><svg class="ric" style="left:1515px" width="26" height="26" viewBox="0 0 26 26"><circle cx="13" cy="13" r="13" fill="#fff"></circle><path d="M7.200 14.200v3.800a1.500 1.500 0 0 0 1.500 1.500h9.400a1.500 1.500 0 0 0 1.500-1.500v-4" fill="none" stroke="#d3cfc7" stroke-width="1.200" stroke-linecap="round"></path><path d="M10.200 17l.8-2.900 6.300-7.500 2 1.700-6.400 7.500z" fill="none" stroke="#d3cfc7" stroke-width="1.100" stroke-linejoin="round"></path></svg><svg class="ric" style="left:1547px" width="26" height="26" viewBox="0 0 26 26"><circle cx="13" cy="13" r="13" fill="#fff"></circle><path d="M9.800 18.800a3.200 3.200 0 0 1-3.200-3.200V7.600a3.200 3.200 0 0 1 3.200-3.200h5.600l2.400 3" fill="none" stroke="#d3cfc7" stroke-width="1.100" stroke-linecap="round" stroke-linejoin="round"></path><rect x="10.100" y="7.900" width="11.400" height="14" rx="3.400" fill="#fff" stroke="#d3cfc7" stroke-width="1.200"></rect><path d="M13.200 12.400h2.800M13.200 15.200h4.800M13.200 18.100h4.800" stroke="#d3cfc7" stroke-width="1.300"></path></svg><svg class="ric" style="left:1579px" width="26" height="26" viewBox="0 0 26 26"><circle cx="13" cy="13" r="13" fill="#fff"></circle><circle cx="13" cy="8.200" r="1.050" fill="#b3aca3"></circle><circle cx="13" cy="13.100" r="1.050" fill="#b3aca3"></circle><circle cx="13" cy="18.200" r="1.050" fill="#b3aca3"></circle></svg></div>
<div class="row" style="top:36px"><div class="c" style="left:0;width:33px"><span class="cb"></span></div><div class="c ctr" style="left:33px;width:50px"><span class="f" style="letter-spacing: 0.08px;">2</span></div><div class="c" style="left:83px;width:170px"><span class="tree"></span><span class="t" style="left:30px;width:139px"><span class="f" style="letter-spacing: -0.36px;">TIVISAMSUNG Crytal ...</span></span></div><div class="c" style="left:253px;width:200px"><span class="t" style="left:10px;width:189px"><span class="f" style="letter-spacing: -0.15px;">Ti vi samsung Crystal UA65AU...</span></span></div><div class="c" style="left:453px;width:200px"><span class="t" style="left:10px;width:189px"><span class="f" style="letter-spacing: -0.11px;">Ti vi, đầu Video, các loại đầu th...</span></span></div><div class="c" style="left:653px;width:200px"><span class="t" style="left:10px;width:189px"><span class="f" style="letter-spacing: -0.11px;">Phòng Hành chính</span></span></div><div class="c rt" style="left:853px;width:120px"><span class="f" style="letter-spacing: 0.08px;">1</span></div><div class="c rt" style="left:973px;width:160px"><span class="f" style="letter-spacing: 0.02px;">17.900.000</span></div><div class="c rt" style="left:1133px;width:200px"><span class="f" style="letter-spacing: 0.02px;">3.580.060</span></div><div class="c rt" style="left:1333px;width:160px"><span class="f" style="letter-spacing: 0.02px;">14.319.940</span></div><div class="c" style="left:1493px;width:14px"></div><div class="c fn" style="left:1507px;width:109px"></div><svg class="ric" style="left:1515px" width="26" height="26" viewBox="0 0 26 26"><circle cx="13" cy="13" r="13" fill="#fff"></circle><path d="M7.200 14.200v3.800a1.500 1.500 0 0 0 1.500 1.500h9.400a1.500 1.500 0 0 0 1.500-1.500v-4" fill="none" stroke="#d3cfc7" stroke-width="1.200" stroke-linecap="round"></path><path d="M10.200 17l.8-2.900 6.300-7.500 2 1.700-6.400 7.500z" fill="none" stroke="#d3cfc7" stroke-width="1.100" stroke-linejoin="round"></path></svg><svg class="ric" style="left:1547px" width="26" height="26" viewBox="0 0 26 26"><circle cx="13" cy="13" r="13" fill="#fff"></circle><path d="M9.800 18.800a3.200 3.200 0 0 1-3.200-3.200V7.600a3.200 3.200 0 0 1 3.200-3.200h5.600l2.400 3" fill="none" stroke="#d3cfc7" stroke-width="1.100" stroke-linecap="round" stroke-linejoin="round"></path><rect x="10.100" y="7.900" width="11.400" height="14" rx="3.400" fill="#fff" stroke="#d3cfc7" stroke-width="1.200"></rect><path d="M13.200 12.400h2.800M13.200 15.200h4.800M13.200 18.100h4.800" stroke="#d3cfc7" stroke-width="1.300"></path></svg><svg class="ric" style="left:1579px" width="26" height="26" viewBox="0 0 26 26"><circle cx="13" cy="13" r="13" fill="#fff"></circle><circle cx="13" cy="8.200" r="1.050" fill="#b3aca3"></circle><circle cx="13" cy="13.100" r="1.050" fill="#b3aca3"></circle><circle cx="13" cy="18.200" r="1.050" fill="#b3aca3"></circle></svg></div>
<div class="row" style="top:71px"><div class="c" style="left:0;width:33px"><span class="cb"></span></div><div class="c ctr" style="left:33px;width:50px"><span class="f" style="letter-spacing: 0.08px;">3</span></div><div class="c" style="left:83px;width:170px"><span class="tree"></span><span class="t" style="left:30px;width:139px"><span class="f" style="letter-spacing: -0.38px;">TIVISAMSUNG1</span></span></div><div class="c" style="left:253px;width:200px"><span class="t" style="left:10px;width:189px"><span class="f" style="letter-spacing: -0.06px;">Ti vi Sam sung</span></span></div><div class="c" style="left:453px;width:200px"><span class="t" style="left:10px;width:189px"><span class="f" style="letter-spacing: -0.11px;">Ti vi, đầu Video, các loại đầu th...</span></span></div><div class="c" style="left:653px;width:200px"><span class="t" style="left:10px;width:189px"><span class="f" style="letter-spacing: -0.11px;">Phòng Hành chính</span></span></div><div class="c rt" style="left:853px;width:120px"><span class="f" style="letter-spacing: 0.08px;">1</span></div><div class="c rt" style="left:973px;width:160px"><span class="f" style="letter-spacing: 0.02px;">17.900.000</span></div><div class="c rt" style="left:1133px;width:200px"><span class="f" style="letter-spacing: 0.02px;">3.580.060</span></div><div class="c rt" style="left:1333px;width:160px"><span class="f" style="letter-spacing: 0.02px;">14.319.940</span></div><div class="c" style="left:1493px;width:14px"></div><div class="c fn" style="left:1507px;width:109px"></div><svg class="ric" style="left:1515px" width="26" height="26" viewBox="0 0 26 26"><circle cx="13" cy="13" r="13" fill="#fff"></circle><path d="M7.200 14.200v3.800a1.500 1.500 0 0 0 1.500 1.500h9.400a1.500 1.500 0 0 0 1.500-1.500v-4" fill="none" stroke="#d3cfc7" stroke-width="1.200" stroke-linecap="round"></path><path d="M10.200 17l.8-2.900 6.300-7.500 2 1.700-6.400 7.500z" fill="none" stroke="#d3cfc7" stroke-width="1.100" stroke-linejoin="round"></path></svg><svg class="ric" style="left:1547px" width="26" height="26" viewBox="0 0 26 26"><circle cx="13" cy="13" r="13" fill="#fff"></circle><path d="M9.800 18.800a3.200 3.200 0 0 1-3.200-3.200V7.600a3.200 3.200 0 0 1 3.200-3.200h5.600l2.400 3" fill="none" stroke="#d3cfc7" stroke-width="1.100" stroke-linecap="round" stroke-linejoin="round"></path><rect x="10.100" y="7.900" width="11.400" height="14" rx="3.400" fill="#fff" stroke="#d3cfc7" stroke-width="1.200"></rect><path d="M13.200 12.400h2.800M13.200 15.200h4.800M13.200 18.100h4.800" stroke="#d3cfc7" stroke-width="1.300"></path></svg><svg class="ric" style="left:1579px" width="26" height="26" viewBox="0 0 26 26"><circle cx="13" cy="13" r="13" fill="#fff"></circle><circle cx="13" cy="8.200" r="1.050" fill="#b3aca3"></circle><circle cx="13" cy="13.100" r="1.050" fill="#b3aca3"></circle><circle cx="13" cy="18.200" r="1.050" fill="#b3aca3"></circle></svg></div>
<div class="row" style="top:106px"><div class="c" style="left:0;width:33px"><span class="cb"></span></div><div class="c ctr" style="left:33px;width:50px"><span class="f" style="letter-spacing: 0.08px;">4</span></div><div class="c" style="left:83px;width:170px"><span class="tree"></span><span class="t" style="left:30px;width:139px"><span class="f" style="letter-spacing: -0.38px;">TIVISAMSUNG2</span></span></div><div class="c" style="left:253px;width:200px"><span class="t" style="left:10px;width:189px"><span class="f" style="letter-spacing: -0.06px;">Ti vi Sam sung</span></span></div><div class="c" style="left:453px;width:200px"><span class="t" style="left:10px;width:189px"><span class="f" style="letter-spacing: -0.11px;">Ti vi, đầu Video, các loại đầu th...</span></span></div><div class="c" style="left:653px;width:200px"><span class="t" style="left:10px;width:189px"><span class="f" style="letter-spacing: -0.11px;">Phòng Hành chính</span></span></div><div class="c rt" style="left:853px;width:120px"><span class="f" style="letter-spacing: 0.08px;">1</span></div><div class="c rt" style="left:973px;width:160px"><span class="f" style="letter-spacing: 0.02px;">17.900.000</span></div><div class="c rt" style="left:1133px;width:200px"><span class="f" style="letter-spacing: 0.02px;">3.580.060</span></div><div class="c rt" style="left:1333px;width:160px"><span class="f" style="letter-spacing: 0.02px;">14.319.940</span></div><div class="c" style="left:1493px;width:14px"></div><div class="c fn" style="left:1507px;width:109px"></div><svg class="ric" style="left:1515px" width="26" height="26" viewBox="0 0 26 26"><circle cx="13" cy="13" r="13" fill="#fff"></circle><path d="M7.200 14.200v3.800a1.500 1.500 0 0 0 1.500 1.500h9.400a1.500 1.500 0 0 0 1.500-1.500v-4" fill="none" stroke="#d3cfc7" stroke-width="1.200" stroke-linecap="round"></path><path d="M10.200 17l.8-2.900 6.300-7.500 2 1.700-6.400 7.500z" fill="none" stroke="#d3cfc7" stroke-width="1.100" stroke-linejoin="round"></path></svg><svg class="ric" style="left:1547px" width="26" height="26" viewBox="0 0 26 26"><circle cx="13" cy="13" r="13" fill="#fff"></circle><path d="M9.800 18.800a3.200 3.200 0 0 1-3.200-3.200V7.600a3.200 3.200 0 0 1 3.200-3.200h5.600l2.400 3" fill="none" stroke="#d3cfc7" stroke-width="1.100" stroke-linecap="round" stroke-linejoin="round"></path><rect x="10.100" y="7.900" width="11.400" height="14" rx="3.400" fill="#fff" stroke="#d3cfc7" stroke-width="1.200"></rect><path d="M13.200 12.400h2.800M13.200 15.200h4.800M13.200 18.100h4.800" stroke="#d3cfc7" stroke-width="1.300"></path></svg><svg class="ric" style="left:1579px" width="26" height="26" viewBox="0 0 26 26"><circle cx="13" cy="13" r="13" fill="#fff"></circle><circle cx="13" cy="8.200" r="1.050" fill="#b3aca3"></circle><circle cx="13" cy="13.100" r="1.050" fill="#b3aca3"></circle><circle cx="13" cy="18.200" r="1.050" fill="#b3aca3"></circle></svg></div>
<div class="row" style="top:141px"><div class="c" style="left:0;width:33px"><span class="cb"></span></div><div class="c ctr" style="left:33px;width:50px"><span class="f" style="letter-spacing: 0.08px;">5</span></div><div class="c" style="left:83px;width:170px"><span class="tree"></span><span class="t" style="left:30px;width:139px"><span class="f" style="letter-spacing: -0.38px;">TIVISAMSUNG3</span></span></div><div class="c" style="left:253px;width:200px"><span class="t" style="left:10px;width:189px"><span class="f" style="letter-spacing: -0.06px;">Ti vi Sam sung</span></span></div><div class="c" style="left:453px;width:200px"><span class="t" style="left:10px;width:189px"><span class="f" style="letter-spacing: -0.11px;">Ti vi, đầu Video, các loại đầu th...</span></span></div><div class="c" style="left:653px;width:200px"><span class="t" style="left:10px;width:189px"><span class="f" style="letter-spacing: -0.11px;">Phòng Hành chính</span></span></div><div class="c rt" style="left:853px;width:120px"><span class="f" style="letter-spacing: 0.08px;">1</span></div><div class="c rt" style="left:973px;width:160px"><span class="f" style="letter-spacing: 0.02px;">17.900.000</span></div><div class="c rt" style="left:1133px;width:200px"><span class="f" style="letter-spacing: 0.02px;">3.580.060</span></div><div class="c rt" style="left:1333px;width:160px"><span class="f" style="letter-spacing: 0.02px;">14.319.940</span></div><div class="c" style="left:1493px;width:14px"></div><div class="c fn" style="left:1507px;width:109px"></div><svg class="ric" style="left:1515px" width="26" height="26" viewBox="0 0 26 26"><circle cx="13" cy="13" r="13" fill="#fff"></circle><path d="M7.200 14.200v3.800a1.500 1.500 0 0 0 1.500 1.500h9.400a1.500 1.500 0 0 0 1.500-1.500v-4" fill="none" stroke="#d3cfc7" stroke-width="1.200" stroke-linecap="round"></path><path d="M10.200 17l.8-2.900 6.300-7.500 2 1.700-6.400 7.500z" fill="none" stroke="#d3cfc7" stroke-width="1.100" stroke-linejoin="round"></path></svg><svg class="ric" style="left:1547px" width="26" height="26" viewBox="0 0 26 26"><circle cx="13" cy="13" r="13" fill="#fff"></circle><path d="M9.800 18.800a3.200 3.200 0 0 1-3.200-3.200V7.600a3.200 3.200 0 0 1 3.200-3.200h5.600l2.400 3" fill="none" stroke="#d3cfc7" stroke-width="1.100" stroke-linecap="round" stroke-linejoin="round"></path><rect x="10.100" y="7.900" width="11.400" height="14" rx="3.400" fill="#fff" stroke="#d3cfc7" stroke-width="1.200"></rect><path d="M13.200 12.400h2.800M13.200 15.200h4.800M13.200 18.100h4.800" stroke="#d3cfc7" stroke-width="1.300"></path></svg><svg class="ric" style="left:1579px" width="26" height="26" viewBox="0 0 26 26"><circle cx="13" cy="13" r="13" fill="#fff"></circle><circle cx="13" cy="8.200" r="1.050" fill="#b3aca3"></circle><circle cx="13" cy="13.100" r="1.050" fill="#b3aca3"></circle><circle cx="13" cy="18.200" r="1.050" fill="#b3aca3"></circle></svg></div>
<div class="row" style="top:176px"><div class="c" style="left:0;width:33px"><span class="cb"></span></div><div class="c ctr" style="left:33px;width:50px"><span class="f" style="letter-spacing: 0.08px;">6</span></div><div class="c" style="left:83px;width:170px"><span class="tree"></span><span class="t" style="left:30px;width:139px"><span class="f" style="letter-spacing: -0.38px;">TIVISAMSUNG4</span></span></div><div class="c" style="left:253px;width:200px"><span class="t" style="left:10px;width:189px"><span class="f" style="letter-spacing: -0.06px;">Ti vi Sam sung</span></span></div><div class="c" style="left:453px;width:200px"><span class="t" style="left:10px;width:189px"><span class="f" style="letter-spacing: -0.11px;">Ti vi, đầu Video, các loại đầu th...</span></span></div><div class="c" style="left:653px;width:200px"><span class="t" style="left:10px;width:189px"><span class="f" style="letter-spacing: -0.11px;">Phòng Hành chính</span></span></div><div class="c rt" style="left:853px;width:120px"><span class="f" style="letter-spacing: 0.08px;">1</span></div><div class="c rt" style="left:973px;width:160px"><span class="f" style="letter-spacing: 0.02px;">17.900.000</span></div><div class="c rt" style="left:1133px;width:200px"><span class="f" style="letter-spacing: 0.02px;">3.580.060</span></div><div class="c rt" style="left:1333px;width:160px"><span class="f" style="letter-spacing: 0.02px;">14.319.940</span></div><div class="c" style="left:1493px;width:14px"></div><div class="c fn" style="left:1507px;width:109px"></div><svg class="ric" style="left:1515px" width="26" height="26" viewBox="0 0 26 26"><circle cx="13" cy="13" r="13" fill="#fff"></circle><path d="M7.200 14.200v3.800a1.500 1.500 0 0 0 1.500 1.500h9.400a1.500 1.500 0 0 0 1.500-1.500v-4" fill="none" stroke="#d3cfc7" stroke-width="1.200" stroke-linecap="round"></path><path d="M10.200 17l.8-2.900 6.300-7.500 2 1.700-6.400 7.500z" fill="none" stroke="#d3cfc7" stroke-width="1.100" stroke-linejoin="round"></path></svg><svg class="ric" style="left:1547px" width="26" height="26" viewBox="0 0 26 26"><circle cx="13" cy="13" r="13" fill="#fff"></circle><path d="M9.800 18.800a3.200 3.200 0 0 1-3.200-3.200V7.600a3.200 3.200 0 0 1 3.200-3.200h5.600l2.400 3" fill="none" stroke="#d3cfc7" stroke-width="1.100" stroke-linecap="round" stroke-linejoin="round"></path><rect x="10.100" y="7.900" width="11.400" height="14" rx="3.400" fill="#fff" stroke="#d3cfc7" stroke-width="1.200"></rect><path d="M13.200 12.400h2.800M13.200 15.200h4.800M13.200 18.100h4.800" stroke="#d3cfc7" stroke-width="1.300"></path></svg><svg class="ric" style="left:1579px" width="26" height="26" viewBox="0 0 26 26"><circle cx="13" cy="13" r="13" fill="#fff"></circle><circle cx="13" cy="8.200" r="1.050" fill="#b3aca3"></circle><circle cx="13" cy="13.100" r="1.050" fill="#b3aca3"></circle><circle cx="13" cy="18.200" r="1.050" fill="#b3aca3"></circle></svg></div>
<div class="row" style="top:211px"><div class="c" style="left:0;width:33px"><span class="cb"></span></div><div class="c ctr" style="left:33px;width:50px"><span class="f" style="letter-spacing: 0.08px;">7</span></div><div class="c" style="left:83px;width:170px"><span class="tree"></span><span class="t" style="left:30px;width:139px"><span class="f" style="letter-spacing: -0.45px;">VTXTHTR</span></span></div><div class="c" style="left:253px;width:200px"><span class="t" style="left:10px;width:189px"><span class="f" style="letter-spacing: -0.06px;">Máy vi tính xách tay (Hùng)</span></span></div><div class="c" style="left:453px;width:200px"><span class="t" style="left:10px;width:189px"><span class="f" style="letter-spacing: -0.08px;">Máy vi tính xách tay (hoặc thiết...</span></span></div><div class="c" style="left:653px;width:200px"><span class="t" style="left:10px;width:189px"><span class="f" style="letter-spacing: -0.11px;">Phòng Hành chính</span></span></div><div class="c rt" style="left:853px;width:120px"><span class="f" style="letter-spacing: 0.08px;">1</span></div><div class="c rt" style="left:973px;width:160px"><span class="f" style="letter-spacing: 0.02px;">14.950.000</span></div><div class="c rt" style="left:1133px;width:200px"><span class="f" style="letter-spacing: 0.02px;">2.990.000</span></div><div class="c rt" style="left:1333px;width:160px"><span class="f" style="letter-spacing: 0.12px;">11.960.000</span></div><div class="c" style="left:1493px;width:14px"></div><div class="c fn" style="left:1507px;width:109px"></div><svg class="ric" style="left:1515px" width="26" height="26" viewBox="0 0 26 26"><circle cx="13" cy="13" r="13" fill="#fff"></circle><path d="M7.200 14.200v3.800a1.500 1.500 0 0 0 1.500 1.500h9.400a1.500 1.500 0 0 0 1.500-1.500v-4" fill="none" stroke="#d3cfc7" stroke-width="1.200" stroke-linecap="round"></path><path d="M10.200 17l.8-2.900 6.300-7.500 2 1.700-6.400 7.500z" fill="none" stroke="#d3cfc7" stroke-width="1.100" stroke-linejoin="round"></path></svg><svg class="ric" style="left:1547px" width="26" height="26" viewBox="0 0 26 26"><circle cx="13" cy="13" r="13" fill="#fff"></circle><path d="M9.800 18.800a3.200 3.200 0 0 1-3.200-3.200V7.600a3.200 3.200 0 0 1 3.200-3.200h5.600l2.400 3" fill="none" stroke="#d3cfc7" stroke-width="1.100" stroke-linecap="round" stroke-linejoin="round"></path><rect x="10.100" y="7.900" width="11.400" height="14" rx="3.400" fill="#fff" stroke="#d3cfc7" stroke-width="1.200"></rect><path d="M13.200 12.400h2.800M13.200 15.200h4.800M13.200 18.100h4.800" stroke="#d3cfc7" stroke-width="1.300"></path></svg><svg class="ric" style="left:1579px" width="26" height="26" viewBox="0 0 26 26"><circle cx="13" cy="13" r="13" fill="#fff"></circle><circle cx="13" cy="8.200" r="1.050" fill="#b3aca3"></circle><circle cx="13" cy="13.100" r="1.050" fill="#b3aca3"></circle><circle cx="13" cy="18.200" r="1.050" fill="#b3aca3"></circle></svg></div>
<div class="row" style="top:246px"><div class="c" style="left:0;width:33px"><span class="cb"></span></div><div class="c ctr" style="left:33px;width:50px"><span class="f" style="letter-spacing: 0.08px;">8</span></div><div class="c" style="left:83px;width:170px"><span class="tree"></span><span class="t" style="left:30px;width:139px"><span class="f" style="letter-spacing: -0.46px;">MAYLOC</span></span></div><div class="c" style="left:253px;width:200px"><span class="t" style="left:10px;width:189px"><span class="f" style="letter-spacing: -0.15px;">Máy lọc nước Kangu</span></span></div><div class="c" style="left:453px;width:200px"><span class="t" style="left:10px;width:189px"><span class="f" style="letter-spacing: -0.07px;">Thiết bị lọc nước</span></span></div><div class="c" style="left:653px;width:200px"><span class="t" style="left:10px;width:189px"><span class="f" style="letter-spacing: -0.11px;">Phòng Hành chính</span></span></div><div class="c rt" style="left:853px;width:120px"><span class="f" style="letter-spacing: 0.08px;">1</span></div><div class="c rt" style="left:973px;width:160px"><span class="f" style="letter-spacing: 0.02px;">13.500.000</span></div><div class="c rt" style="left:1133px;width:200px"><span class="f" style="letter-spacing: 0.02px;">2.700.000</span></div><div class="c rt" style="left:1333px;width:160px"><span class="f" style="letter-spacing: 0.02px;">10.800.000</span></div><div class="c" style="left:1493px;width:14px"></div><div class="c fn" style="left:1507px;width:109px"></div><svg class="ric" style="left:1515px" width="26" height="26" viewBox="0 0 26 26"><circle cx="13" cy="13" r="13" fill="#fff"></circle><path d="M7.200 14.200v3.800a1.500 1.500 0 0 0 1.500 1.500h9.400a1.500 1.500 0 0 0 1.500-1.500v-4" fill="none" stroke="#d3cfc7" stroke-width="1.200" stroke-linecap="round"></path><path d="M10.200 17l.8-2.900 6.300-7.500 2 1.700-6.400 7.500z" fill="none" stroke="#d3cfc7" stroke-width="1.100" stroke-linejoin="round"></path></svg><svg class="ric" style="left:1547px" width="26" height="26" viewBox="0 0 26 26"><circle cx="13" cy="13" r="13" fill="#fff"></circle><path d="M9.800 18.800a3.200 3.200 0 0 1-3.200-3.200V7.600a3.200 3.200 0 0 1 3.200-3.200h5.600l2.400 3" fill="none" stroke="#d3cfc7" stroke-width="1.100" stroke-linecap="round" stroke-linejoin="round"></path><rect x="10.100" y="7.900" width="11.400" height="14" rx="3.400" fill="#fff" stroke="#d3cfc7" stroke-width="1.200"></rect><path d="M13.200 12.400h2.800M13.200 15.200h4.800M13.200 18.100h4.800" stroke="#d3cfc7" stroke-width="1.300"></path></svg><svg class="ric" style="left:1579px" width="26" height="26" viewBox="0 0 26 26"><circle cx="13" cy="13" r="13" fill="#fff"></circle><circle cx="13" cy="8.200" r="1.050" fill="#b3aca3"></circle><circle cx="13" cy="13.100" r="1.050" fill="#b3aca3"></circle><circle cx="13" cy="18.200" r="1.050" fill="#b3aca3"></circle></svg></div>
<div class="row" style="top:281px"><div class="c" style="left:0;width:33px"><span class="cb"></span></div><div class="c ctr" style="left:33px;width:50px"><span class="f" style="letter-spacing: 0.08px;">9</span></div><div class="c" style="left:83px;width:170px"><span class="tree"></span><span class="t" style="left:30px;width:139px"><span class="f" style="letter-spacing: -0.32px;">QĐ634</span></span></div><div class="c" style="left:253px;width:200px"><span class="t" style="left:10px;width:189px"><span class="f" style="letter-spacing: -0.09px;">Giá trị quyền sử dụng đất</span></span></div><div class="c" style="left:453px;width:200px"><span class="t" style="left:10px;width:189px"><span class="f" style="letter-spacing: -0.15px;">Quyền sử dụng đất</span></span></div><div class="c" style="left:653px;width:200px"><span class="t" style="left:10px;width:189px"><span class="f" style="letter-spacing: -0.11px;">Phòng Hành chính</span></span></div><div class="c rt" style="left:853px;width:120px"><span class="f" style="letter-spacing: 0.02px;">4.320</span></div><div class="c rt" style="left:973px;width:160px"><span class="f" style="letter-spacing: 0.09px;">11.384.064.000</span></div><div class="c rt" style="left:1133px;width:200px"><span class="f" style="letter-spacing: 0.08px;">0</span></div><div class="c rt" style="left:1333px;width:160px"><span class="f" style="letter-spacing: 0.09px;">11.384.064.000</span></div><div class="c" style="left:1493px;width:14px"></div><div class="c fn" style="left:1507px;width:109px"></div><svg class="ric" style="left:1515px" width="26" height="26" viewBox="0 0 26 26"><circle cx="13" cy="13" r="13" fill="#fff"></circle><path d="M7.200 14.200v3.800a1.500 1.500 0 0 0 1.500 1.500h9.400a1.500 1.500 0 0 0 1.500-1.500v-4" fill="none" stroke="#d3cfc7" stroke-width="1.200" stroke-linecap="round"></path><path d="M10.200 17l.8-2.900 6.300-7.500 2 1.700-6.400 7.500z" fill="none" stroke="#d3cfc7" stroke-width="1.100" stroke-linejoin="round"></path></svg><svg class="ric" style="left:1547px" width="26" height="26" viewBox="0 0 26 26"><circle cx="13" cy="13" r="13" fill="#fff"></circle><path d="M9.800 18.800a3.200 3.200 0 0 1-3.200-3.200V7.600a3.200 3.200 0 0 1 3.200-3.200h5.600l2.400 3" fill="none" stroke="#d3cfc7" stroke-width="1.100" stroke-linecap="round" stroke-linejoin="round"></path><rect x="10.100" y="7.900" width="11.400" height="14" rx="3.400" fill="#fff" stroke="#d3cfc7" stroke-width="1.200"></rect><path d="M13.200 12.400h2.800M13.200 15.200h4.800M13.200 18.100h4.800" stroke="#d3cfc7" stroke-width="1.300"></path></svg><svg class="ric" style="left:1579px" width="26" height="26" viewBox="0 0 26 26"><circle cx="13" cy="13" r="13" fill="#fff"></circle><circle cx="13" cy="8.200" r="1.050" fill="#b3aca3"></circle><circle cx="13" cy="13.100" r="1.050" fill="#b3aca3"></circle><circle cx="13" cy="18.200" r="1.050" fill="#b3aca3"></circle></svg></div>
<div class="row" style="top:316px"><div class="c" style="left:0;width:33px"><span class="cb"></span></div><div class="c ctr" style="left:33px;width:50px"><span class="f" style="letter-spacing: 0.08px;">10</span></div><div class="c" style="left:83px;width:170px"><span class="tree"></span><span class="t" style="left:30px;width:139px"><span class="f" style="letter-spacing: -0.19px;">Khu 2</span></span></div><div class="c" style="left:253px;width:200px"><span class="t" style="left:10px;width:189px"><span class="f" style="letter-spacing: -0.11px;">Đất khu 2 (Khu nhà công vụ)</span></span></div><div class="c" style="left:453px;width:200px"><span class="t" style="left:10px;width:189px"><span class="f" style="letter-spacing: -0.15px;">Quyền sử dụng đất</span></span></div><div class="c" style="left:653px;width:200px"><span class="t" style="left:10px;width:189px"><span class="f" style="letter-spacing: -0.11px;">Phòng Hành chính</span></span></div><div class="c rt" style="left:853px;width:120px"><span class="f" style="letter-spacing: 0.02px;">9.272</span></div><div class="c rt" style="left:973px;width:160px"><span class="f" style="letter-spacing: 0.02px;">8.901.120.000</span></div><div class="c rt" style="left:1133px;width:200px"><span class="f" style="letter-spacing: 0.08px;">0</span></div><div class="c rt" style="left:1333px;width:160px"><span class="f" style="letter-spacing: 0.02px;">8.901.120.000</span></div><div class="c" style="left:1493px;width:14px"></div><div class="c fn" style="left:1507px;width:109px"></div><svg class="ric" style="left:1515px" width="26" height="26" viewBox="0 0 26 26"><circle cx="13" cy="13" r="13" fill="#fff"></circle><path d="M7.200 14.200v3.800a1.500 1.500 0 0 0 1.500 1.500h9.400a1.500 1.500 0 0 0 1.500-1.500v-4" fill="none" stroke="#d3cfc7" stroke-width="1.200" stroke-linecap="round"></path><path d="M10.200 17l.8-2.900 6.300-7.500 2 1.700-6.400 7.500z" fill="none" stroke="#d3cfc7" stroke-width="1.100" stroke-linejoin="round"></path></svg><svg class="ric" style="left:1547px" width="26" height="26" viewBox="0 0 26 26"><circle cx="13" cy="13" r="13" fill="#fff"></circle><path d="M9.800 18.800a3.200 3.200 0 0 1-3.200-3.200V7.600a3.200 3.200 0 0 1 3.200-3.200h5.600l2.400 3" fill="none" stroke="#d3cfc7" stroke-width="1.100" stroke-linecap="round" stroke-linejoin="round"></path><rect x="10.100" y="7.900" width="11.400" height="14" rx="3.400" fill="#fff" stroke="#d3cfc7" stroke-width="1.200"></rect><path d="M13.200 12.400h2.800M13.200 15.200h4.800M13.200 18.100h4.800" stroke="#d3cfc7" stroke-width="1.300"></path></svg><svg class="ric" style="left:1579px" width="26" height="26" viewBox="0 0 26 26"><circle cx="13" cy="13" r="13" fill="#fff"></circle><circle cx="13" cy="8.200" r="1.050" fill="#b3aca3"></circle><circle cx="13" cy="13.100" r="1.050" fill="#b3aca3"></circle><circle cx="13" cy="18.200" r="1.050" fill="#b3aca3"></circle></svg></div>
<div class="row" style="top:351px"><div class="c" style="left:0;width:33px"><span class="cb"></span></div><div class="c ctr" style="left:33px;width:50px"><span class="f" style="letter-spacing: 0.56px;">11</span></div><div class="c" style="left:83px;width:170px"><span class="tree"></span><span class="t" style="left:30px;width:139px"><span class="f" style="letter-spacing: 0.4px;">211</span></span></div><div class="c" style="left:253px;width:200px"><span class="t" style="left:10px;width:189px"><span class="f" style="letter-spacing: -0.27px;">Giá trị quyền SDĐ</span></span></div><div class="c" style="left:453px;width:200px"><span class="t" style="left:10px;width:189px"><span class="f" style="letter-spacing: -0.15px;">Quyền sử dụng đất</span></span></div><div class="c" style="left:653px;width:200px"><span class="t" style="left:10px;width:189px"><span class="f" style="letter-spacing: -0.11px;">Phòng Hành chính</span></span></div><div class="c rt" style="left:853px;width:120px"><span class="f" style="letter-spacing: 0.03px;">13.830</span></div><div class="c rt" style="left:973px;width:160px"><span class="f" style="letter-spacing: 0.02px;">13.276.800.000</span></div><div class="c rt" style="left:1133px;width:200px"><span class="f" style="letter-spacing: 0.08px;">0</span></div><div class="c rt" style="left:1333px;width:160px"><span class="f" style="letter-spacing: 0.02px;">13.276.800.000</span></div><div class="c" style="left:1493px;width:14px"></div><div class="c fn" style="left:1507px;width:109px"></div><svg class="ric" style="left:1515px" width="26" height="26" viewBox="0 0 26 26"><circle cx="13" cy="13" r="13" fill="#fff"></circle><path d="M7.200 14.200v3.800a1.500 1.500 0 0 0 1.500 1.500h9.400a1.500 1.500 0 0 0 1.500-1.500v-4" fill="none" stroke="#d3cfc7" stroke-width="1.200" stroke-linecap="round"></path><path d="M10.200 17l.8-2.900 6.300-7.500 2 1.700-6.400 7.500z" fill="none" stroke="#d3cfc7" stroke-width="1.100" stroke-linejoin="round"></path></svg><svg class="ric" style="left:1547px" width="26" height="26" viewBox="0 0 26 26"><circle cx="13" cy="13" r="13" fill="#fff"></circle><path d="M9.800 18.800a3.200 3.200 0 0 1-3.200-3.200V7.600a3.200 3.200 0 0 1 3.200-3.200h5.600l2.400 3" fill="none" stroke="#d3cfc7" stroke-width="1.100" stroke-linecap="round" stroke-linejoin="round"></path><rect x="10.100" y="7.900" width="11.400" height="14" rx="3.400" fill="#fff" stroke="#d3cfc7" stroke-width="1.200"></rect><path d="M13.200 12.400h2.800M13.200 15.200h4.800M13.200 18.100h4.800" stroke="#d3cfc7" stroke-width="1.300"></path></svg><svg class="ric" style="left:1579px" width="26" height="26" viewBox="0 0 26 26"><circle cx="13" cy="13" r="13" fill="#fff"></circle><circle cx="13" cy="8.200" r="1.050" fill="#b3aca3"></circle><circle cx="13" cy="13.100" r="1.050" fill="#b3aca3"></circle><circle cx="13" cy="18.200" r="1.050" fill="#b3aca3"></circle></svg></div>
<div class="row" style="top:386px"><div class="c" style="left:0;width:33px"><span class="cb"></span></div><div class="c ctr" style="left:33px;width:50px"><span class="f" style="letter-spacing: 0.08px;">12</span></div><div class="c" style="left:83px;width:170px"><span class="tree"></span><span class="t" style="left:30px;width:139px"><span class="f" style="letter-spacing: -0.19px;">Khu 4</span></span></div><div class="c" style="left:253px;width:200px"><span class="t" style="left:10px;width:189px"><span class="f" style="letter-spacing: -0.08px;">Nhà ký túc xá số 1</span></span></div><div class="c" style="left:453px;width:200px"><span class="t" style="left:10px;width:189px"><span class="f" style="letter-spacing: -0.26px;">Cấp II</span></span></div><div class="c" style="left:653px;width:200px"><span class="t" style="left:10px;width:189px"><span class="f" style="letter-spacing: -0.11px;">Phòng Hành chính</span></span></div><div class="c rt" style="left:853px;width:120px"><span class="f" style="letter-spacing: 0.08px;">1</span></div><div class="c rt" style="left:973px;width:160px"><span class="f" style="letter-spacing: 0.02px;">6.552.149.800</span></div><div class="c rt" style="left:1133px;width:200px"><span class="f" style="letter-spacing: 0.02px;">5.265.881.916</span></div><div class="c rt" style="left:1333px;width:160px"><span class="f" style="letter-spacing: 0.02px;">1.286.267.884</span></div><div class="c" style="left:1493px;width:14px"></div><div class="c fn" style="left:1507px;width:109px"></div><svg class="ric" style="left:1515px" width="26" height="26" viewBox="0 0 26 26"><circle cx="13" cy="13" r="13" fill="#fff"></circle><path d="M7.200 14.200v3.800a1.500 1.500 0 0 0 1.500 1.500h9.400a1.500 1.500 0 0 0 1.500-1.500v-4" fill="none" stroke="#d3cfc7" stroke-width="1.200" stroke-linecap="round"></path><path d="M10.200 17l.8-2.900 6.300-7.500 2 1.700-6.400 7.500z" fill="none" stroke="#d3cfc7" stroke-width="1.100" stroke-linejoin="round"></path></svg><svg class="ric" style="left:1547px" width="26" height="26" viewBox="0 0 26 26"><circle cx="13" cy="13" r="13" fill="#fff"></circle><path d="M9.800 18.800a3.200 3.200 0 0 1-3.200-3.200V7.600a3.200 3.200 0 0 1 3.200-3.200h5.600l2.400 3" fill="none" stroke="#d3cfc7" stroke-width="1.100" stroke-linecap="round" stroke-linejoin="round"></path><rect x="10.100" y="7.900" width="11.400" height="14" rx="3.400" fill="#fff" stroke="#d3cfc7" stroke-width="1.200"></rect><path d="M13.200 12.400h2.800M13.200 15.200h4.800M13.200 18.100h4.800" stroke="#d3cfc7" stroke-width="1.300"></path></svg><svg class="ric" style="left:1579px" width="26" height="26" viewBox="0 0 26 26"><circle cx="13" cy="13" r="13" fill="#fff"></circle><circle cx="13" cy="8.200" r="1.050" fill="#b3aca3"></circle><circle cx="13" cy="13.100" r="1.050" fill="#b3aca3"></circle><circle cx="13" cy="18.200" r="1.050" fill="#b3aca3"></circle></svg></div>
<div class="row" style="top:421px"><div class="c" style="left:0;width:33px"><span class="cb"></span></div><div class="c ctr" style="left:33px;width:50px"><span class="f" style="letter-spacing: 0.08px;">13</span></div><div class="c" style="left:83px;width:170px"><span class="tree"></span><span class="t" style="left:30px;width:139px"><span class="f" style="letter-spacing: -0.19px;">Khu 5</span></span></div><div class="c" style="left:253px;width:200px"><span class="t" style="left:10px;width:189px"><span class="f" style="letter-spacing: -0.32px;">Nhà KLF</span></span></div><div class="c" style="left:453px;width:200px"><span class="t" style="left:10px;width:189px"><span class="f" style="letter-spacing: -0.26px;">Cấp II</span></span></div><div class="c" style="left:653px;width:200px"><span class="t" style="left:10px;width:189px"><span class="f" style="letter-spacing: -0.11px;">Phòng Hành chính</span></span></div><div class="c rt" style="left:853px;width:120px"><span class="f" style="letter-spacing: 0.08px;">1</span></div><div class="c rt" style="left:973px;width:160px"><span class="f" style="letter-spacing: 0.09px;">2.565.211.300</span></div><div class="c rt" style="left:1133px;width:200px"><span class="f" style="letter-spacing: 0.02px;">1.705.358.526</span></div><div class="c rt" style="left:1333px;width:160px"><span class="f" style="letter-spacing: 0.03px;">859.852.774</span></div><div class="c" style="left:1493px;width:14px"></div><div class="c fn" style="left:1507px;width:109px"></div><svg class="ric" style="left:1515px" width="26" height="26" viewBox="0 0 26 26"><circle cx="13" cy="13" r="13" fill="#fff"></circle><path d="M7.200 14.200v3.800a1.500 1.500 0 0 0 1.500 1.500h9.400a1.500 1.500 0 0 0 1.500-1.500v-4" fill="none" stroke="#d3cfc7" stroke-width="1.200" stroke-linecap="round"></path><path d="M10.200 17l.8-2.900 6.300-7.500 2 1.700-6.400 7.500z" fill="none" stroke="#d3cfc7" stroke-width="1.100" stroke-linejoin="round"></path></svg><svg class="ric" style="left:1547px" width="26" height="26" viewBox="0 0 26 26"><circle cx="13" cy="13" r="13" fill="#fff"></circle><path d="M9.800 18.800a3.200 3.200 0 0 1-3.200-3.200V7.600a3.200 3.200 0 0 1 3.200-3.200h5.600l2.400 3" fill="none" stroke="#d3cfc7" stroke-width="1.100" stroke-linecap="round" stroke-linejoin="round"></path><rect x="10.100" y="7.900" width="11.400" height="14" rx="3.400" fill="#fff" stroke="#d3cfc7" stroke-width="1.200"></rect><path d="M13.200 12.400h2.800M13.200 15.200h4.800M13.200 18.100h4.800" stroke="#d3cfc7" stroke-width="1.300"></path></svg><svg class="ric" style="left:1579px" width="26" height="26" viewBox="0 0 26 26"><circle cx="13" cy="13" r="13" fill="#fff"></circle><circle cx="13" cy="8.200" r="1.050" fill="#b3aca3"></circle><circle cx="13" cy="13.100" r="1.050" fill="#b3aca3"></circle><circle cx="13" cy="18.200" r="1.050" fill="#b3aca3"></circle></svg></div>
<div class="row" style="top:456px"><div class="c" style="left:0;width:33px"><span class="cb"></span></div><div class="c ctr" style="left:33px;width:50px"><span class="f" style="letter-spacing: 0.08px;">14</span></div><div class="c" style="left:83px;width:170px"><span class="tree"></span><span class="t" style="left:30px;width:139px"><span class="f" style="letter-spacing: -0.19px;">Khu 3</span></span></div><div class="c" style="left:253px;width:200px"><span class="t" style="left:10px;width:189px"><span class="f" style="letter-spacing: -0.06px;">Nhà thực hành thí nghiệm</span></span></div><div class="c" style="left:453px;width:200px"><span class="t" style="left:10px;width:189px"><span class="f" style="letter-spacing: -0.26px;">Cấp II</span></span></div><div class="c" style="left:653px;width:200px"><span class="t" style="left:10px;width:189px"><span class="f" style="letter-spacing: -0.11px;">Phòng Hành chính</span></span></div><div class="c rt" style="left:853px;width:120px"><span class="f" style="letter-spacing: 0.08px;">1</span></div><div class="c rt" style="left:973px;width:160px"><span class="f" style="letter-spacing: 0.02px;">1.857.673.930</span></div><div class="c rt" style="left:1133px;width:200px"><span class="f" style="letter-spacing: 0.02px;">1.124.652.689</span></div><div class="c rt" style="left:1333px;width:160px"><span class="f" style="letter-spacing: 0.03px;">733.021.241</span></div><div class="c" style="left:1493px;width:14px"></div><div class="c fn" style="left:1507px;width:109px"></div><svg class="ric" style="left:1515px" width="26" height="26" viewBox="0 0 26 26"><circle cx="13" cy="13" r="13" fill="#fff"></circle><path d="M7.200 14.200v3.800a1.500 1.500 0 0 0 1.500 1.500h9.400a1.500 1.500 0 0 0 1.500-1.500v-4" fill="none" stroke="#d3cfc7" stroke-width="1.200" stroke-linecap="round"></path><path d="M10.200 17l.8-2.900 6.300-7.500 2 1.700-6.400 7.500z" fill="none" stroke="#d3cfc7" stroke-width="1.100" stroke-linejoin="round"></path></svg><svg class="ric" style="left:1547px" width="26" height="26" viewBox="0 0 26 26"><circle cx="13" cy="13" r="13" fill="#fff"></circle><path d="M9.800 18.800a3.200 3.200 0 0 1-3.200-3.200V7.600a3.200 3.200 0 0 1 3.200-3.200h5.600l2.400 3" fill="none" stroke="#d3cfc7" stroke-width="1.100" stroke-linecap="round" stroke-linejoin="round"></path><rect x="10.100" y="7.900" width="11.400" height="14" rx="3.400" fill="#fff" stroke="#d3cfc7" stroke-width="1.200"></rect><path d="M13.200 12.400h2.800M13.200 15.200h4.800M13.200 18.100h4.800" stroke="#d3cfc7" stroke-width="1.300"></path></svg><svg class="ric" style="left:1579px" width="26" height="26" viewBox="0 0 26 26"><circle cx="13" cy="13" r="13" fill="#fff"></circle><circle cx="13" cy="8.200" r="1.050" fill="#b3aca3"></circle><circle cx="13" cy="13.100" r="1.050" fill="#b3aca3"></circle><circle cx="13" cy="18.200" r="1.050" fill="#b3aca3"></circle></svg></div>
<div class="row" style="top:491px"><div class="c" style="left:0;width:33px"><span class="cb"></span></div><div class="c ctr" style="left:33px;width:50px"><span class="f" style="letter-spacing: 0.08px;">15</span></div><div class="c" style="left:83px;width:170px"><span class="tree"></span><span class="t" style="left:30px;width:139px"><span class="f" style="letter-spacing: -0.19px;">Khu 6</span></span></div><div class="c" style="left:253px;width:200px"><span class="t" style="left:10px;width:189px"><span class="f" style="letter-spacing: -0.14px;">Cổng hàng rào</span></span></div><div class="c" style="left:453px;width:200px"><span class="t" style="left:10px;width:189px"><span class="f" style="letter-spacing: -0.05px;">Các vật kiến trúc khác</span></span></div><div class="c" style="left:653px;width:200px"><span class="t" style="left:10px;width:189px"><span class="f" style="letter-spacing: -0.11px;">Phòng Hành chính</span></span></div><div class="c rt" style="left:853px;width:120px"><span class="f" style="letter-spacing: 0.08px;">1</span></div><div class="c rt" style="left:973px;width:160px"><span class="f" style="letter-spacing: 0.03px;">105.874.600</span></div><div class="c rt" style="left:1133px;width:200px"><span class="f" style="letter-spacing: 0.02px;">21.174.920</span></div><div class="c rt" style="left:1333px;width:160px"><span class="f" style="letter-spacing: 0.02px;">84.699.680</span></div><div class="c" style="left:1493px;width:14px"></div><div class="c fn" style="left:1507px;width:109px"></div><svg class="ric" style="left:1515px" width="26" height="26" viewBox="0 0 26 26"><circle cx="13" cy="13" r="13" fill="#fff"></circle><path d="M7.200 14.200v3.800a1.500 1.500 0 0 0 1.500 1.500h9.400a1.500 1.500 0 0 0 1.500-1.500v-4" fill="none" stroke="#d3cfc7" stroke-width="1.200" stroke-linecap="round"></path><path d="M10.200 17l.8-2.900 6.300-7.500 2 1.700-6.400 7.500z" fill="none" stroke="#d3cfc7" stroke-width="1.100" stroke-linejoin="round"></path></svg><svg class="ric" style="left:1547px" width="26" height="26" viewBox="0 0 26 26"><circle cx="13" cy="13" r="13" fill="#fff"></circle><path d="M9.800 18.800a3.200 3.200 0 0 1-3.200-3.200V7.600a3.200 3.200 0 0 1 3.200-3.200h5.600l2.400 3" fill="none" stroke="#d3cfc7" stroke-width="1.100" stroke-linecap="round" stroke-linejoin="round"></path><rect x="10.100" y="7.900" width="11.400" height="14" rx="3.400" fill="#fff" stroke="#d3cfc7" stroke-width="1.200"></rect><path d="M13.200 12.400h2.800M13.200 15.200h4.800M13.200 18.100h4.800" stroke="#d3cfc7" stroke-width="1.300"></path></svg><svg class="ric" style="left:1579px" width="26" height="26" viewBox="0 0 26 26"><circle cx="13" cy="13" r="13" fill="#fff"></circle><circle cx="13" cy="8.200" r="1.050" fill="#b3aca3"></circle><circle cx="13" cy="13.100" r="1.050" fill="#b3aca3"></circle><circle cx="13" cy="18.200" r="1.050" fill="#b3aca3"></circle></svg></div>
  </div>
  <div id="vsb"></div>
  <div id="sum">
<div style="left:0px;width:33px"></div>
<div style="left:33px;width:50px"></div>
<div style="left:83px;width:170px"></div>
<div style="left:253px;width:200px"></div>
<div style="left:453px;width:200px"></div>
<div style="left:653px;width:200px"></div>
<div style="left:853px;width:120px"><span class="f" style="letter-spacing: 0.22px;">27.728</span></div>
<div style="left:973px;width:160px"><span class="f" style="letter-spacing: 0.21px;">60.594.650.399</span></div>
<div style="left:1133px;width:200px"><span class="f" style="letter-spacing: 0.21px;">17.805.616.692</span></div>
<div style="left:1333px;width:160px"><span class="f" style="letter-spacing: 0.21px;">42.789.033.707</span></div>
<div style="left:1493px;width:14px"></div>
<div style="left:1507px;width:109px;border-right:none"></div>
  </div>
  <div id="hsb"><i></i></div>
</div>
<div id="pg"><span class="f" style="left: 10px; letter-spacing: -0.16px;">Tổng số:&nbsp;</span><b class="f" style="left: 64px; letter-spacing: 0.23px;">98</b><span class="f" style="left: 81px; letter-spacing: -0.04px;">bản ghi</span><span class="f" style="left: 1276px; letter-spacing: 0.09px;">Số dòng/trang</span><span class="f" style="left: 1369.5px; letter-spacing: 0.08px;">20</span><svg style="position:absolute;left:1396.5px;top:16px" width="11" height="8" viewBox="0 0 11 8"><path d="M1.400 1.600l4.100 4.100 4.100-4.100" fill="none" stroke="#111" stroke-width="1.800"></path></svg><span class="f" style="left: 1440px; color: rgb(153, 153, 153); font-size: 11px; letter-spacing: -0.84px;">&lt;</span><span class="f" style="left: 1456.7px; letter-spacing: -0.1px;">Trang</span><b class="f" style="left: 1504.3px; letter-spacing: 0.23px;">1</b><span class="f" style="left: 1521px; letter-spacing: 0.08px;">2</span><span class="f" style="left: 1539.3px; letter-spacing: 0.08px;">3</span><span class="f" style="left: 1557px; letter-spacing: -0.18px;">...</span><span class="f" style="left: 1577.5px; letter-spacing: 0.08px;">5</span><span class="f" style="left: 1599.5px; font-size: 11px; letter-spacing: -0.67px;">&gt;</span></div><div id="pgl"></div>
<div id="bt"><div id="tabs"><span class="f on" style="left: 16px; letter-spacing: -0.04px;">Lịch sử biến động</span><span class="f" style="left: 152px; letter-spacing: -0.03px;">Thông tin kê khai</span><span class="f" style="left: 282px; letter-spacing: -0.14px;">Tệp đính kèm</span><i></i>
<svg style="position:absolute;left:1590px;top:8px" width="16" height="16" viewBox="0 0 16 16"><circle cx="8" cy="8" r="8" fill="#e4e6ec"></circle><path d="M4.800 6.600L8 9.800l3.200-3.200" fill="none" stroke="#3b5af0" stroke-width="1.500"></path></svg></div>
<div id="bh">
<div class="hc " style="left:0px;width:60px;padding-left:17px"><span class="f" style="letter-spacing: -0.11px;">STT</span></div>
<div class="hc " style="left:60px;width:120px;padding-left:10px"><span class="f" style="letter-spacing: -0.66px;">Số chứng từ</span></div>
<div class="hc hm" style="left:180px;width:150px"><span class="f" style="letter-spacing: -0.6px;">Ngày chứng từ</span></div>
<div class="hc hm" style="left:330px;width:150px"><span class="f" style="letter-spacing: -0.41px;">Ngày biến động</span></div>
<div class="hc " style="left:480px;width:294px;padding-left:10px"><span class="f" style="letter-spacing: -0.48px;">Nội dung</span></div>
<div class="hc hr" style="left:774px;width:150px"><span class="f" style="letter-spacing: -0.44px;">Nguyên giá</span></div>
<div class="hc hr" style="left:924px;width:150px"><span class="f" style="letter-spacing: -0.45px;">Số tiền thực hiện</span></div>
<div class="hc hr" style="left:1074px;width:150px"><span class="f" style="letter-spacing: -0.2px;">Giá trị HM/KH</span></div>
<div class="hc hr" style="left:1224px;width:150px"><span class="f" style="letter-spacing: -0.42px;">Hao mòn lũy kế</span></div>
<div class="hc hr" style="left:1374px;width:150px"><span class="f" style="letter-spacing: -0.37px;">Giá trị còn lại</span></div>
<div class="hc" style="left:1524px;width:3px;padding:0"></div>
<div class="hc hm" style="left:1527px;width:90px;border-right:none"><span class="f" style="letter-spacing: -0.67px;">Chức năng</span></div></div>
<div class="br b1" style="top:69px"><div class="c ctr" style="left:0;width:60px"><span class="f" style="letter-spacing: 0.08px;">1</span></div><div class="c" style="left:60px;width:120px;padding-left:10px"></div><div class="c ctr" style="left:180px;width:150px"><span class="f" style="letter-spacing: 0.41px;">01/01/2023</span></div><div class="c ctr" style="left:330px;width:150px"><span class="f" style="letter-spacing: 0.41px;">01/01/2023</span></div><div class="c" style="left:480px;width:294px;padding-left:10px"><span class="f" style="letter-spacing: -0.01px;">Cập nhật loại tài sản theo Thông tư 23/2023/TT...</span></div><div class="c rt" style="left:774px;width:150px"></div><div class="c rt" style="left:924px;width:150px"></div><div class="c rt" style="left:1074px;width:150px"></div><div class="c rt" style="left:1224px;width:150px"></div><div class="c rt" style="left:1374px;width:150px"></div><div class="c" style="left:1524px;width:3px"></div><div class="c ctr fn" style="left:1525px;width:84px;padding-right:2px"><a class="f" style="letter-spacing: -0.06px;">Hủy cập nhật</a></div></div>
<div class="br" style="top:105px"><div class="c ctr" style="left:0;width:60px"><span class="f" style="letter-spacing: 0.08px;">2</span></div><div class="c" style="left:60px;width:120px;padding-left:10px"><a class="f" style="letter-spacing: 0.12px;">HM2026</a></div><div class="c ctr" style="left:180px;width:150px"><span class="f" style="letter-spacing: 0.41px;">31/12/2022</span></div><div class="c ctr" style="left:330px;width:150px"><span class="f" style="letter-spacing: 0.41px;">31/12/2022</span></div><div class="c" style="left:480px;width:294px;padding-left:10px"><span class="f" style="letter-spacing: 0.03px;">Hao mòn</span></div><div class="c rt" style="left:774px;width:150px"><span class="f" style="letter-spacing: 0.02px;">34.294.000</span></div><div class="c rt" style="left:924px;width:150px"><span class="f" style="letter-spacing: 0.02px;">6.858.800</span></div><div class="c rt" style="left:1074px;width:150px"><span class="f" style="letter-spacing: 0.02px;">6.858.800</span></div><div class="c rt" style="left:1224px;width:150px"><span class="f" style="letter-spacing: 0.02px;">6.858.800</span></div><div class="c rt" style="left:1374px;width:150px"><span class="f" style="letter-spacing: 0.02px;">27.435.200</span></div><div class="c" style="left:1524px;width:3px"></div><div class="c fn" style="left:1525px;width:84px"></div><svg style="position:absolute;left:1558px;top:9px" width="16" height="18" viewBox="0 0 16 18" fill="none" stroke="#cfcac2" stroke-width="1.100" stroke-linecap="round"><path d="M1.200 5h13.600M5 4.800C5 2.600 6 1.400 8 1.400s3 1.200 3 3.400M2.800 5.200v7.400c0 1.600.8 2.600 2.400 2.600h5.600c1.600 0 2.400-1 2.400-2.600V5.200M6.600 7.800v4M9.400 7.800v4"></path></svg></div>
<div class="br" style="top:140px"><div class="c ctr" style="left:0;width:60px"><span class="f" style="letter-spacing: 0.08px;">3</span></div><div class="c" style="left:60px;width:120px;padding-left:10px"><a class="f" style="letter-spacing: -0.12px;">GT000023</a></div><div class="c ctr" style="left:180px;width:150px"><span class="f" style="letter-spacing: 0.51px;">22/11/2022</span></div><div class="c ctr" style="left:330px;width:150px"><span class="f" style="letter-spacing: 0.51px;">22/11/2022</span></div><div class="c" style="left:480px;width:294px;padding-left:10px"><span class="f" style="letter-spacing: -0.12px;">Ghi tăng</span></div><div class="c rt" style="left:774px;width:150px"><span class="f" style="letter-spacing: 0.02px;">34.294.000</span></div><div class="c rt" style="left:924px;width:150px"><span class="f" style="letter-spacing: 0.08px;">0</span></div><div class="c rt" style="left:1074px;width:150px"><span class="f" style="letter-spacing: 0.08px;">0</span></div><div class="c rt" style="left:1224px;width:150px"><span class="f" style="letter-spacing: 0.08px;">0</span></div><div class="c rt" style="left:1374px;width:150px"><span class="f" style="letter-spacing: 0.02px;">34.294.000</span></div><div class="c" style="left:1524px;width:3px"></div><div class="c fn" style="left:1525px;width:84px"></div><svg style="position:absolute;left:1558px;top:9px" width="16" height="18" viewBox="0 0 16 18" fill="none" stroke="#cfcac2" stroke-width="1.100" stroke-linecap="round"><path d="M1.200 5h13.600M5 4.800C5 2.600 6 1.400 8 1.400s3 1.200 3 3.400M2.800 5.200v7.400c0 1.600.8 2.600 2.400 2.600h5.600c1.600 0 2.400-1 2.400-2.600V5.200M6.600 7.800v4M9.400 7.800v4"></path></svg></div>
<div style="position:absolute;left:1609px;top:69px;width:7px;height:87px;background:#efefef"><div style="width:7px;height:71px;background:#d0d0d0"></div></div>
</div><div style="position:absolute;left:1902px;top:828px;width:11px;height:36px;background:#f5f5f5;border-bottom:1px solid #e2e2e2"></div>
<div style="position:absolute;left:1903px;top:348px;width:10px;height:15.500px;background:#4262f0;border-radius:2px 0 0 2px"><svg style="position:absolute;left:3px;top:3px" width="7" height="10" viewBox="0 0 7 10"><path d="M1.500 1l3.800 4-3.800 4" fill="none" stroke="#fff" stroke-width="1.300"></path></svg></div>
<div style="position:absolute;left:1863px;top:368px;width:52px;height:151px;background:#fff;border-radius:7px 0 0 7px;box-shadow:-2px 0 8px rgba(120,120,140,.15)"></div>
<svg style="position:absolute;left:1871px;top:376px" width="40" height="40" viewBox="0 0 40 40"><circle cx="20" cy="20" r="19.800" fill="#4262f0"></circle><g transform="translate(20 20.500) rotate(42)" fill="#fff"><path d="M-4.600-7.200h9.200l-1.900 4.600v7.400a1.800 1.800 0 0 1-1.800 1.800h-1.800a1.800 1.800 0 0 1-1.800-1.800v-7.400z"></path><ellipse cx="4.900" cy="4.400" rx="1.700" ry="2.700"></ellipse><path d="M-3.200-9l-.8-2M0-9.400v-2.200M3.200-9l.8-2" stroke="#fff" stroke-width="1" stroke-linecap="round"></path></g></svg>
<svg style="position:absolute;left:1871px;top:424px" width="40" height="40" viewBox="0 0 40 40"><circle cx="20" cy="20" r="19.800" fill="#4262f0"></circle><path d="M18 8.600c-4.600 0-8.300 3.400-8.300 7.700 0 2.100.9 4 2.400 5.400l-1.800 4.600 4.600-2.400c1 .3 2 .5 3.100.5 4.600 0 8.300-3.500 8.300-7.800s-3.700-8-8.300-8z" fill="#fff"></path><path d="M24.300 19c-3.700 0-6.700 2.700-6.700 6s3 6 6.700 6c.8 0 1.500-.1 2.200-.3l3.600 1.700-1-3.400c1.200-1.100 1.900-2.500 1.900-4 0-3.300-3-6-6.700-6z" fill="#fff" stroke="#4262f0" stroke-width="1.400"></path></svg>
<svg style="position:absolute;left:1871px;top:472px" width="40" height="40" viewBox="0 0 40 40"><circle cx="20" cy="20" r="19.800" fill="#1230d6"></circle><circle cx="10" cy="13.500" r="5" fill="#bcd3ff"></circle><circle cx="30" cy="13.500" r="5" fill="#bcd3ff"></circle><ellipse cx="20" cy="21.500" rx="14" ry="11.500" fill="#e6f0ff"></ellipse><rect x="9" y="17" width="22" height="12.500" rx="6.200" fill="#161a5a"></rect><circle cx="14.600" cy="22.600" r="2.900" fill="#7f98f2"></circle><circle cx="25.400" cy="22.600" r="2.900" fill="#7f98f2"></circle><circle cx="15.200" cy="21.800" r="1.100" fill="#fff"></circle><circle cx="26" cy="21.800" r="1.100" fill="#fff"></circle><path d="M18.600 26.600c.9.800 1.900.8 2.800 0" fill="none" stroke="#fff" stroke-width=".9" stroke-linecap="round"></path></svg>

</div>
<div id="redbox"></div>


</body></html>
